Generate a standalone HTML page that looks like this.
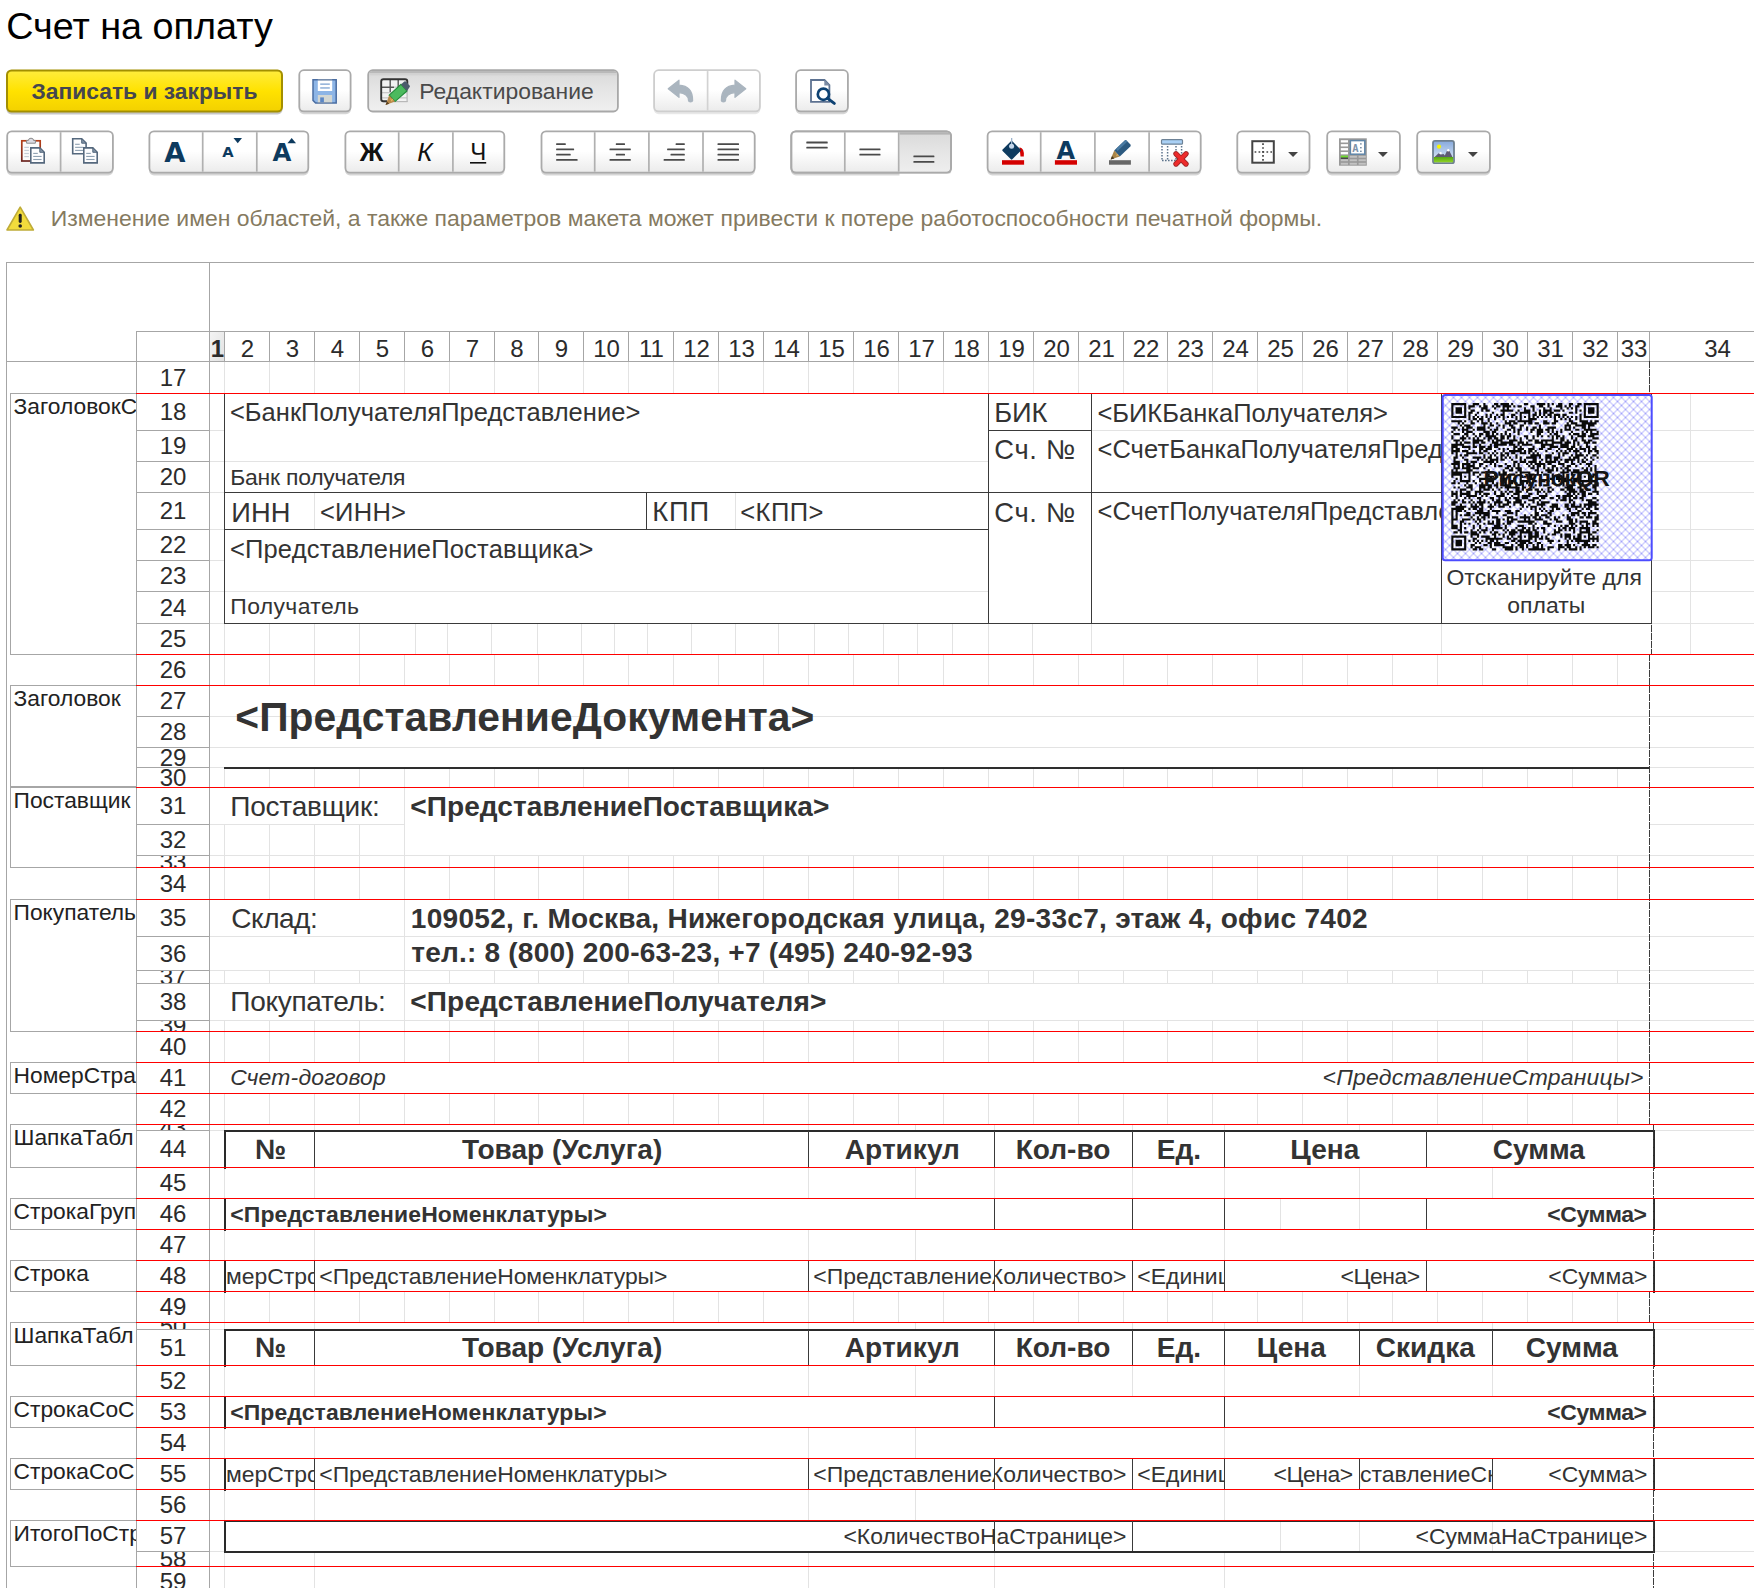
<!DOCTYPE html>
<html lang="ru"><head><meta charset="utf-8"><title>Счет на оплату</title>
<style>
html,body{margin:0;padding:0;background:#fff}
body{width:1754px;height:1588px;position:relative;overflow:hidden;font-family:"Liberation Sans",sans-serif;color:#333}
.abs{position:absolute}
#title{position:absolute;left:6.2px;top:4px;font-size:37.75px;line-height:44px;color:#000;white-space:nowrap}
.lbl{position:absolute;white-space:nowrap}
#warn{position:absolute;left:50.7px;top:204px;font-size:22.96px;line-height:28px;color:#857a5f;white-space:nowrap}
.t{position:absolute;white-space:nowrap;overflow:hidden;color:#333;box-sizing:border-box}
.t span{position:absolute;white-space:nowrap}
.b{font-weight:700}
.i{font-style:italic}
.rn{position:absolute;left:137px;width:72px;text-align:center;font-size:24px;color:#2b2b2b;overflow:hidden;white-space:nowrap}
.cn{position:absolute;top:332px;height:29px;line-height:34px;text-align:center;font-size:24px;color:#2b2b2b;overflow:hidden;white-space:nowrap}
.an{position:absolute;left:11px;width:125px;font-size:22.8px;color:#222;overflow:hidden;white-space:nowrap;height:28px;line-height:25px}
</style></head>
<body>
<div id="title">Счет на оплату</div>
<svg class="abs" style="left:0;top:0" width="1754" height="1588" viewBox="0 0 1754 1588">
<defs><linearGradient id="gSel" x1="0" y1="0" x2="1" y2="1"><stop offset="0" stop-color="#f4f4f4"/><stop offset="1" stop-color="#e2e2e2"/></linearGradient></defs>
<defs>
<linearGradient id="gBtn" x1="0" y1="0" x2="0" y2="1"><stop offset="0" stop-color="#fff"/><stop offset="0.48" stop-color="#fff"/><stop offset="1" stop-color="#ebebeb"/></linearGradient>
<linearGradient id="gYel" x1="0" y1="0" x2="0" y2="1"><stop offset="0" stop-color="#ffec3d"/><stop offset="0.5" stop-color="#ffe200"/><stop offset="1" stop-color="#f3d100"/></linearGradient>
<linearGradient id="gPr" x1="0" y1="0" x2="0" y2="1"><stop offset="0" stop-color="#d9d9d9"/><stop offset="0.5" stop-color="#e6e6e6"/><stop offset="1" stop-color="#f0f0f0"/></linearGradient>
<linearGradient id="gSky" x1="0" y1="0" x2="0" y2="1"><stop offset="0" stop-color="#86a9dc"/><stop offset="1" stop-color="#e9f2fc"/></linearGradient>
<linearGradient id="gGrass" x1="0" y1="0" x2="0" y2="1"><stop offset="0" stop-color="#55a515"/><stop offset="1" stop-color="#90d424"/></linearGradient>
<linearGradient id="gClip" x1="0" y1="0" x2="0" y2="1"><stop offset="0" stop-color="#b5401a"/><stop offset="1" stop-color="#6b2520"/></linearGradient>
<pattern id="hatch" width="8" height="8" x="1605.5" y="501.5" patternUnits="userSpaceOnUse"><path d="M-1 -1L9 9M9 -1L-1 9" stroke="#a4a4fb" stroke-width="1" fill="none"/></pattern>
</defs>
<rect x="6.5" y="72.1" width="276" height="42.4" rx="5.0" fill="#000" opacity="0.22"/>
<rect x="7.0" y="70.5" width="275.0" height="41.0" rx="4.5" fill="url(#gYel)" stroke="#a38f00" stroke-width="2.0"/>
<rect x="298.9" y="71.89999999999999" width="52.10000000000002" height="42.4" rx="5.0" fill="#000" opacity="0.16"/>
<rect x="299.29999999999995" y="70.2" width="51.300000000000026" height="41.2" rx="4.5" fill="url(#gBtn)" stroke="#aaaaaa" stroke-width="1.8"/>
<rect x="368.2" y="70.2" width="249.69999999999993" height="41.30000000000001" rx="4.5" fill="url(#gPr)" stroke="#a8a8a8" stroke-width="1.8"/>
<clipPath id="c367_69"><rect x="369.1" y="71.1" width="247.89999999999995" height="39.50000000000001" rx="3.5"/></clipPath>
<g clip-path="url(#c367_69)"><rect x="367.3" y="69.3" width="251.49999999999994" height="4" fill="#b9b9b9"/><rect x="367.3" y="73.3" width="251.49999999999994" height="2" fill="#d2d2d2"/></g>
<rect x="653.7" y="71.89999999999999" width="106.59999999999991" height="42.4" rx="5.0" fill="#000" opacity="0.09"/>
<rect x="654.1" y="70.2" width="105.79999999999991" height="41.2" rx="4.5" fill="url(#gBtn)" stroke="#cecece" stroke-width="1.8"/>
<rect x="706.75" y="71.1" width="1.7" height="39.4" fill="#d2d2d2"/>
<rect x="795.7" y="71.89999999999999" width="52.59999999999991" height="42.4" rx="5.0" fill="#000" opacity="0.16"/>
<rect x="796.1" y="70.2" width="51.79999999999991" height="41.2" rx="4.5" fill="url(#gBtn)" stroke="#aaaaaa" stroke-width="1.8"/>
<path d="M313 79.8H336.2V103H315.6L313 100.4Z" fill="#8db5e6" stroke="#4a6da2" stroke-width="1.5" stroke-linejoin="miter"/>
<rect x="317.8" y="80.4" width="14.4" height="10.6" fill="#fff"/><rect x="317.8" y="79.3" width="14.4" height="1.2" fill="#8a9bb0"/>
<rect x="320.2" y="83.4" width="9.6" height="1.5" fill="#8fb0d8"/><rect x="320.2" y="87.2" width="9.6" height="1.5" fill="#8fb0d8"/>
<rect x="317.8" y="95" width="14.3" height="7.6" fill="#d3d7d3"/><rect x="317.8" y="102" width="14.3" height="1.2" fill="#8a9bb0"/><rect x="320.2" y="97.4" width="3.7" height="5" fill="#5b87c5"/>
<rect x="381.5" y="80" width="25.5" height="21" fill="#f2f2f2"/>
<rect x="382" y="86.5" width="25" height="1.3" fill="#c8c8c8"/>
<rect x="382" y="92" width="25" height="1.3" fill="#c8c8c8"/>
<rect x="382" y="97.2" width="25" height="1.3" fill="#c8c8c8"/>
<rect x="382" y="101" width="25.5" height="1.2" fill="#b8b8b8"/><rect x="406.5" y="82" width="1.2" height="20" fill="#b8b8b8"/>
<rect x="389.5" y="80" width="1.4" height="12" fill="#555"/>
<rect x="397.5" y="80" width="1.4" height="12" fill="#555"/>
<rect x="382" y="86.6" width="12" height="1.4" fill="#555"/>
<path d="M387 101.2H383.5Q381.2 101.2 381.2 98.9V81.5Q381.2 79.2 383.5 79.2H405Q407.3 79.2 407.3 81.5V84" fill="none" stroke="#333" stroke-width="1.9"/>
<path d="M389.2 95.2L401 84.4L407 91L395 101.6Z" fill="#4cba5e" stroke="#1f8a36" stroke-width="1.1"/>
<path d="M401 84.4L404.3 81.5Q405.3 80.8 406.2 81.7L409.6 85.4Q410.4 86.4 409.5 87.3L407 91Z" fill="#4b5b6b"/>
<path d="M389.2 95.2L385.6 105L395 101.6Z" fill="#b8894a"/><path d="M385.6 105L386.9 101.4L389.2 103.7Z" fill="#5a4020"/><path d="M389.6 97.5L391.5 99.8L393.2 98.6L391.9 101.8Z" fill="#f0c060"/>
<path d="M668.2 88.8L679 80.2V85.2Q692.8 86 692.6 100.6Q692.4 101.9 690.6 101.9Q688.6 101.9 688.5 100.4Q688.2 93.4 679 92.6V97.4Z" fill="#aab5bf" stroke="#aab5bf" stroke-width="1.2" stroke-linejoin="round"/>
<path d="M745.8 88.8L735 80.2V85.2Q721.2 86 721.4 100.6Q721.6 101.9 723.4 101.9Q725.4 101.9 725.5 100.4Q725.8 93.4 735 92.6V97.4Z" fill="#aab5bf" stroke="#aab5bf" stroke-width="1.2" stroke-linejoin="round"/>
<path d="M811 80H824.5L829.4 85V101.9H811Z" fill="#fff" stroke="#5d7291" stroke-width="1.8" stroke-linejoin="miter"/><path d="M824.3 79.6V85.4H830Z" fill="#7b8ba3"/>
<circle cx="823.4" cy="94.2" r="5.6" fill="#fff" stroke="#0e4273" stroke-width="2.7"/><path d="M827.6 98.4L834.3 103.4" stroke="#0e4273" stroke-width="3" stroke-linecap="round"/>
<rect x="6.8" y="133.0" width="106.5" height="42.49999999999999" rx="5.0" fill="#000" opacity="0.16"/>
<rect x="7.2" y="131.3" width="105.7" height="41.3" rx="4.5" fill="url(#gBtn)" stroke="#aaaaaa" stroke-width="1.8"/>
<rect x="59.75" y="132.20000000000002" width="1.7" height="39.49999999999999" fill="#b0b0b0"/>
<rect x="149.0" y="133.0" width="159.7" height="42.49999999999999" rx="5.0" fill="#000" opacity="0.16"/>
<rect x="149.4" y="131.3" width="158.89999999999998" height="41.3" rx="4.5" fill="url(#gBtn)" stroke="#aaaaaa" stroke-width="1.8"/>
<rect x="201.85" y="132.20000000000002" width="1.7" height="39.49999999999999" fill="#b0b0b0"/>
<rect x="255.95000000000002" y="132.20000000000002" width="1.7" height="39.49999999999999" fill="#b0b0b0"/>
<rect x="345.0" y="133.0" width="159.7" height="42.49999999999999" rx="5.0" fill="#000" opacity="0.16"/>
<rect x="345.4" y="131.3" width="158.89999999999998" height="41.3" rx="4.5" fill="url(#gBtn)" stroke="#aaaaaa" stroke-width="1.8"/>
<rect x="397.84999999999997" y="132.20000000000002" width="1.7" height="39.49999999999999" fill="#b0b0b0"/>
<rect x="452.04999999999995" y="132.20000000000002" width="1.7" height="39.49999999999999" fill="#b0b0b0"/>
<rect x="541.1" y="133.0" width="214.0" height="42.49999999999999" rx="5.0" fill="#000" opacity="0.16"/>
<rect x="541.5" y="131.3" width="213.2" height="41.3" rx="4.5" fill="url(#gBtn)" stroke="#aaaaaa" stroke-width="1.8"/>
<rect x="593.85" y="132.20000000000002" width="1.7" height="39.49999999999999" fill="#b0b0b0"/>
<rect x="648.05" y="132.20000000000002" width="1.7" height="39.49999999999999" fill="#b0b0b0"/>
<rect x="702.15" y="132.20000000000002" width="1.7" height="39.49999999999999" fill="#b0b0b0"/>
<rect x="790.9" y="133.0" width="160.5" height="42.49999999999999" rx="5.0" fill="#000" opacity="0.16"/>
<rect x="791.3" y="131.3" width="159.7" height="41.3" rx="4.5" fill="url(#gBtn)" stroke="#aaaaaa" stroke-width="1.8"/>
<clipPath id="c790_130"><rect x="792.1999999999999" y="132.20000000000002" width="157.9" height="39.49999999999999" rx="3.5"/></clipPath>
<g clip-path="url(#c790_130)"><rect x="899.5" y="130.4" width="51.5" height="46.099999999999994" fill="url(#gPr)"/><rect x="899.5" y="130.4" width="51.5" height="4.2" fill="#b4b4b4"/></g>
<rect x="899.5" y="173.5" width="53.5" height="3" fill="#fff"/>
<rect x="791.3" y="131.3" width="159.7" height="41.3" rx="4.5" fill="none" stroke="#aaaaaa" stroke-width="1.8"/>
<rect x="843.9499999999999" y="132.20000000000002" width="1.7" height="39.49999999999999" fill="#b0b0b0"/>
<rect x="897.85" y="132.20000000000002" width="1.7" height="39.49999999999999" fill="#b0b0b0"/>
<rect x="987.2" y="133.0" width="213.89999999999986" height="42.49999999999999" rx="5.0" fill="#000" opacity="0.16"/>
<rect x="987.6" y="131.3" width="213.09999999999985" height="41.3" rx="4.5" fill="url(#gBtn)" stroke="#aaaaaa" stroke-width="1.8"/>
<rect x="1039.8500000000001" y="132.20000000000002" width="1.7" height="39.49999999999999" fill="#b0b0b0"/>
<rect x="1094.0500000000002" y="132.20000000000002" width="1.7" height="39.49999999999999" fill="#b0b0b0"/>
<rect x="1148.25" y="132.20000000000002" width="1.7" height="39.49999999999999" fill="#b0b0b0"/>
<rect x="1236.9" y="133.0" width="73.0" height="42.49999999999999" rx="5.0" fill="#000" opacity="0.16"/>
<rect x="1237.3000000000002" y="131.3" width="72.2" height="41.3" rx="4.5" fill="url(#gBtn)" stroke="#aaaaaa" stroke-width="1.8"/>
<rect x="1326.8" y="133.0" width="73.5" height="42.49999999999999" rx="5.0" fill="#000" opacity="0.16"/>
<rect x="1327.2" y="131.3" width="72.7" height="41.3" rx="4.5" fill="url(#gBtn)" stroke="#aaaaaa" stroke-width="1.8"/>
<rect x="1416.8" y="133.0" width="73.5" height="42.49999999999999" rx="5.0" fill="#000" opacity="0.16"/>
<rect x="1417.2" y="131.3" width="72.7" height="41.3" rx="4.5" fill="url(#gBtn)" stroke="#aaaaaa" stroke-width="1.8"/>
<rect x="21.8" y="140.8" width="18.4" height="20.2" fill="#fbfbfb" stroke="url(#gClip)" stroke-width="1.7"/>
<path d="M26.6 143.2V140.4H28.3Q28.6 138.2 31 138.2Q33.4 138.2 33.7 140.4H35.4V143.2Z" fill="#dcdce4" stroke="#8a8a8a" stroke-width="1"/>
<rect x="24.3" y="146.8" width="4.6" height="1.2" fill="#c5cdd6"/>
<rect x="24.3" y="149.85000000000002" width="4.6" height="1.2" fill="#c5cdd6"/>
<rect x="24.3" y="152.9" width="4.6" height="1.2" fill="#c5cdd6"/>
<rect x="24.3" y="155.95000000000002" width="4.6" height="1.2" fill="#c5cdd6"/>
<path d="M30.8 147.9H39.8L44.2 152.29999999999998V162.89999999999998H30.8Z" fill="#fdfdfe" stroke="#55687d" stroke-width="1.6" stroke-linejoin="miter"/><path d="M39.8 147.9V152.29999999999998H44.2Z" fill="#8495a8" stroke="#55687d" stroke-width="1"/><rect x="33.2" y="152.85" width="4.6" height="1.1" fill="#8ea0b1"/><rect x="33.2" y="155.9" width="8.399999999999999" height="1.1" fill="#8ea0b1"/><rect x="33.2" y="158.95" width="8.399999999999999" height="1.1" fill="#8ea0b1"/>
<path d="M72.7 138.8H81.7L86.10000000000001 143.2V153.79999999999998H72.7Z" fill="#fdfdfe" stroke="#55687d" stroke-width="1.6" stroke-linejoin="miter"/><path d="M81.7 138.8V143.2H86.10000000000001Z" fill="#8495a8" stroke="#55687d" stroke-width="1"/><rect x="75.10000000000001" y="143.75" width="4.6" height="1.1" fill="#8ea0b1"/><rect x="75.10000000000001" y="146.8" width="8.399999999999999" height="1.1" fill="#8ea0b1"/><rect x="75.10000000000001" y="149.85" width="8.399999999999999" height="1.1" fill="#8ea0b1"/>
<path d="M83.8 147.9H92.8L97.2 152.29999999999998V162.89999999999998H83.8Z" fill="#fdfdfe" stroke="#55687d" stroke-width="1.6" stroke-linejoin="miter"/><path d="M92.8 147.9V152.29999999999998H97.2Z" fill="#8495a8" stroke="#55687d" stroke-width="1"/><rect x="86.2" y="152.85" width="4.6" height="1.1" fill="#8ea0b1"/><rect x="86.2" y="155.9" width="8.399999999999999" height="1.1" fill="#8ea0b1"/><rect x="86.2" y="158.95" width="8.399999999999999" height="1.1" fill="#8ea0b1"/>
<text x="174.9" y="162" font-size="27.4" font-family="DejaVu Sans, Liberation Sans, sans-serif" font-weight="700" fill="#0d3a5e" text-anchor="middle">A</text>
<text x="227.9" y="156.7" font-size="14.7" font-family="DejaVu Sans, Liberation Sans, sans-serif" font-weight="700" fill="#0d3a5e" text-anchor="middle">A</text>
<path d="M233.5 138H242L237.75 143.2Z" fill="#0d3a5e"/>
<text x="282" y="160.8" font-size="24.4" font-family="DejaVu Sans, Liberation Sans, sans-serif" font-weight="700" fill="#0d3a5e" text-anchor="middle">A</text>
<path d="M287.4 143.2H296L291.7 138Z" fill="#0d3a5e"/>
<text x="371.5" y="161" font-size="26" font-family="Liberation Sans, sans-serif" font-weight="700" fill="#111" text-anchor="middle">Ж</text>
<text x="425" y="161" font-size="26" font-family="Liberation Sans, sans-serif" font-style="italic" fill="#111" text-anchor="middle">К</text>
<text x="478.2" y="159.5" font-size="24" font-family="Liberation Sans, sans-serif" fill="#111" text-anchor="middle">Ч</text><rect x="470" y="162" width="16.2" height="1.6" fill="#111"/>
<rect x="556.1" y="143.2" width="9.699999999999932" height="1.8" rx="0.5" fill="#4a4a4a"/><rect x="556.1" y="148.5" width="18.0" height="1.8" rx="0.5" fill="#4a4a4a"/><rect x="556.1" y="153.79999999999998" width="14.600000000000023" height="1.8" rx="0.5" fill="#4a4a4a"/><rect x="556.1" y="159.0" width="21.5" height="1.8" rx="0.5" fill="#4a4a4a"/>
<rect x="615.8" y="143.2" width="9.200000000000045" height="1.8" rx="0.5" fill="#4a4a4a"/><rect x="609.5" y="148.5" width="21.299999999999955" height="1.8" rx="0.5" fill="#4a4a4a"/><rect x="615.8" y="153.79999999999998" width="9.200000000000045" height="1.8" rx="0.5" fill="#4a4a4a"/><rect x="609.5" y="159.0" width="21.299999999999955" height="1.8" rx="0.5" fill="#4a4a4a"/>
<rect x="675.6" y="143.2" width="9.199999999999932" height="1.8" rx="0.5" fill="#4a4a4a"/><rect x="667.1" y="148.5" width="17.699999999999932" height="1.8" rx="0.5" fill="#4a4a4a"/><rect x="670.5" y="153.79999999999998" width="14.299999999999955" height="1.8" rx="0.5" fill="#4a4a4a"/><rect x="663.6" y="159.0" width="21.199999999999932" height="1.8" rx="0.5" fill="#4a4a4a"/>
<rect x="717.5" y="143.2" width="21.5" height="1.8" rx="0.5" fill="#4a4a4a"/><rect x="717.5" y="148.5" width="21.5" height="1.8" rx="0.5" fill="#4a4a4a"/><rect x="717.5" y="153.79999999999998" width="21.5" height="1.8" rx="0.5" fill="#4a4a4a"/><rect x="717.5" y="159.0" width="21.5" height="1.8" rx="0.5" fill="#4a4a4a"/>
<rect x="806.3" y="141.6" width="21.40000000000009" height="1.8" rx="0.5" fill="#4a4a4a"/>
<rect x="806.3" y="146.79999999999998" width="21.40000000000009" height="1.8" rx="0.5" fill="#4a4a4a"/>
<rect x="859.4" y="148.5" width="21.100000000000023" height="1.8" rx="0.5" fill="#4a4a4a"/>
<rect x="859.4" y="153.79999999999998" width="21.100000000000023" height="1.8" rx="0.5" fill="#4a4a4a"/>
<rect x="913.4" y="155.5" width="21.0" height="1.8" rx="0.5" fill="#4a4a4a"/>
<rect x="913.4" y="160.9" width="21.0" height="1.8" rx="0.5" fill="#4a4a4a"/>
<rect x="1002" y="160.2" width="22.1" height="4.5" fill="#d40000"/>
<path d="M1019.5 147.2Q1024.6 148 1023.8 156.6L1020.5 156.6Z" fill="#d40000"/>
<path d="M1011.6 140.6L1020.6 149.6Q1021.3 150.3 1020.6 151L1012.3 159.3Q1011.6 160 1010.9 159.3L1002.6 151Q1001.9 150.3 1002.6 149.6Z" fill="#0d3a5e"/>
<rect x="1011" y="138" width="1.3" height="8" fill="#9db4cc"/><circle cx="1011.6" cy="146.3" r="2.5" fill="#c4d6ea"/>
<rect x="1054.9" y="160.2" width="22.1" height="4.5" fill="#d40000"/>
<text x="1065.9" y="158.7" font-size="24" font-family="DejaVu Sans, Liberation Sans, sans-serif" font-weight="700" fill="#0d3a5e" text-anchor="middle">A</text>
<rect x="1109" y="160.2" width="21.9" height="4.5" fill="#666"/>
<path d="M1114.2 150.4L1124.6 140.4Q1125.6 139.6 1126.6 140.5L1130.4 144.6Q1131.2 145.6 1130.3 146.5L1119.8 156.6Z" fill="#2c5a80"/><path d="M1116 149L1125.6 139.9L1127.4 141.6L1117.6 151Z" fill="#4a7ba3"/>
<path d="M1114.2 150.4L1110.6 159.6L1119.8 156.6Z" fill="#a88448"/><path d="M1110.6 159.6L1112 156L1114.4 158.4Z" fill="#4a3a20"/><path d="M1115 152.5L1116.6 155L1118.2 154L1117 156.4Z" fill="#e8c070"/>
<rect x="1161.5" y="139.6" width="21" height="4.6" rx="1" fill="#a9d0f5" stroke="#6d8296" stroke-width="1.2"/>
<path d="M1162 146V161" stroke="#5d748c" stroke-width="1.5" stroke-dasharray="1.6 1.4"/>
<path d="M1167.6 146V161" stroke="#5d748c" stroke-width="1.5" stroke-dasharray="1.6 1.4"/>
<path d="M1176 146V161" stroke="#5d748c" stroke-width="1.5" stroke-dasharray="1.6 1.4"/>
<path d="M1181.6 146V161" stroke="#5d748c" stroke-width="1.5" stroke-dasharray="1.6 1.4"/>
<path d="M1162 160.4H1183" stroke="#5d748c" stroke-width="1.5" stroke-dasharray="1.6 1.4"/>
<path d="M1176 153.8L1186 164M1186 153.8L1176 164" stroke="#a02828" stroke-width="5.4" stroke-linecap="round"/><path d="M1176 153.8L1186 164M1186 153.8L1176 164" stroke="#ee2b2b" stroke-width="3.6" stroke-linecap="round"/>
<rect x="1252.3" y="141.2" width="21.5" height="21.5" fill="#fff" stroke="#444" stroke-width="2"/>
<path d="M1254.6 152H1272" stroke="#444" stroke-width="1.7" stroke-dasharray="1.7 2.25"/><path d="M1263 143.2V161.4" stroke="#444" stroke-width="1.7" stroke-dasharray="1.7 2.25"/>
<path d="M1288.1 152H1298.0L1293.05 157Z" fill="#444"/>
<path d="M1378 152H1387.9L1382.95 157Z" fill="#444"/>
<path d="M1468 152H1477.9L1472.95 157Z" fill="#444"/>
<rect x="1339" y="138.3" width="27.8" height="27.4" fill="#999"/>
<rect x="1340.8" y="140.2" width="7.2" height="2.3" fill="#fff"/>
<rect x="1340.8" y="144.14999999999998" width="7.2" height="2.3" fill="#fff"/>
<rect x="1340.8" y="148.1" width="7.2" height="2.3" fill="#fff"/>
<rect x="1340.8" y="152.04999999999998" width="7.2" height="2.3" fill="#fff"/>
<rect x="1340.8" y="155.6" width="7.2" height="2" fill="#6edb2e"/><rect x="1340.8" y="157.6" width="7.2" height="1.2" fill="#333"/>
<rect x="1349.7" y="155.8" width="7.2" height="1.9" fill="#c2c2c2"/>
<rect x="1358.6" y="155.8" width="7.2" height="1.9" fill="#c2c2c2"/>
<rect x="1340.8" y="159.3" width="7.2" height="1.9" fill="#c2c2c2"/>
<rect x="1349.7" y="159.3" width="7.2" height="1.9" fill="#c2c2c2"/>
<rect x="1358.6" y="159.3" width="7.2" height="1.9" fill="#c2c2c2"/>
<rect x="1340.8" y="162.8" width="7.2" height="1.9" fill="#c2c2c2"/>
<rect x="1349.7" y="162.8" width="7.2" height="1.9" fill="#c2c2c2"/>
<rect x="1358.6" y="162.8" width="7.2" height="1.9" fill="#c2c2c2"/>
<rect x="1350.4" y="140.6" width="14.4" height="13.6" fill="#fff" stroke="#5f86a8" stroke-width="1.5"/>
<text x="1355.5" y="151.6" font-size="10.5" font-family="DejaVu Sans Mono, Liberation Mono, monospace" font-weight="700" fill="#7d93aa" text-anchor="middle">A</text>
<rect x="1360" y="143.2" width="1.7" height="1.4" fill="#7d93aa"/>
<rect x="1360" y="147" width="1.7" height="1.4" fill="#7d93aa"/>
<rect x="1360" y="150.6" width="1.7" height="1.4" fill="#7d93aa"/>
<rect x="1433" y="140.9" width="21" height="22.3" rx="2" fill="url(#gSky)" stroke="#6e8090" stroke-width="1.8"/>
<rect x="1433.9" y="157" width="19.2" height="5.3" fill="url(#gGrass)"/>
<path d="M1434.6 157L1438.6 153.2L1441 154.6L1443.6 154L1444.8 155.4L1447.6 149.6L1449.4 151L1452.2 156.4V157Z" fill="#5f5b72"/>
<circle cx="1439" cy="146.7" r="2.1" fill="#f8f400"/><circle cx="1448.2" cy="150.2" r="1.2" fill="#fff"/><circle cx="1440.6" cy="153.2" r="1.1" fill="#fff"/>
<path d="M20.2 207.2L33.4 230H7Z" fill="#f2dc3c" stroke="#bfac38" stroke-width="1.6" stroke-linejoin="round"/><rect x="18.7" y="213.8" width="3" height="9.2" rx="1.4" fill="#222"/><circle cx="20.2" cy="226" r="1.8" fill="#222"/>
<g shape-rendering="crispEdges"><rect x="210" y="393" width="14" height="1" fill="#e3e3e3"/><rect x="210" y="430" width="14" height="1" fill="#e3e3e3"/><rect x="210" y="461" width="14" height="1" fill="#e3e3e3"/><rect x="210" y="492" width="14" height="1" fill="#e3e3e3"/><rect x="210" y="529" width="14" height="1" fill="#e3e3e3"/><rect x="210" y="560" width="14" height="1" fill="#e3e3e3"/><rect x="210" y="591" width="14" height="1" fill="#e3e3e3"/><rect x="210" y="623" width="14" height="1" fill="#e3e3e3"/><rect x="210" y="654" width="14" height="1" fill="#e3e3e3"/><rect x="210" y="685" width="14" height="1" fill="#e3e3e3"/><rect x="210" y="716" width="14" height="1" fill="#e3e3e3"/><rect x="210" y="747" width="14" height="1" fill="#e3e3e3"/><rect x="210" y="767" width="14" height="1" fill="#e3e3e3"/><rect x="210" y="787" width="14" height="1" fill="#e3e3e3"/><rect x="210" y="824" width="14" height="1" fill="#e3e3e3"/><rect x="210" y="855" width="14" height="1" fill="#e3e3e3"/><rect x="210" y="867" width="14" height="1" fill="#e3e3e3"/><rect x="210" y="899" width="14" height="1" fill="#e3e3e3"/><rect x="210" y="936" width="14" height="1" fill="#e3e3e3"/><rect x="210" y="970" width="14" height="1" fill="#e3e3e3"/><rect x="210" y="983" width="14" height="1" fill="#e3e3e3"/><rect x="210" y="1020" width="14" height="1" fill="#e3e3e3"/><rect x="210" y="1031" width="14" height="1" fill="#e3e3e3"/><rect x="210" y="1062" width="14" height="1" fill="#e3e3e3"/><rect x="210" y="1093" width="14" height="1" fill="#e3e3e3"/><rect x="210" y="1124" width="14" height="1" fill="#e3e3e3"/><rect x="210" y="1130" width="14" height="1" fill="#e3e3e3"/><rect x="210" y="1167" width="14" height="1" fill="#e3e3e3"/><rect x="210" y="1198" width="14" height="1" fill="#e3e3e3"/><rect x="210" y="1229" width="14" height="1" fill="#e3e3e3"/><rect x="210" y="1260" width="14" height="1" fill="#e3e3e3"/><rect x="210" y="1291" width="14" height="1" fill="#e3e3e3"/><rect x="210" y="1322" width="14" height="1" fill="#e3e3e3"/><rect x="210" y="1329" width="14" height="1" fill="#e3e3e3"/><rect x="210" y="1365" width="14" height="1" fill="#e3e3e3"/><rect x="210" y="1396" width="14" height="1" fill="#e3e3e3"/><rect x="210" y="1427" width="14" height="1" fill="#e3e3e3"/><rect x="210" y="1458" width="14" height="1" fill="#e3e3e3"/><rect x="210" y="1489" width="14" height="1" fill="#e3e3e3"/><rect x="210" y="1520" width="14" height="1" fill="#e3e3e3"/><rect x="210" y="1551" width="14" height="1" fill="#e3e3e3"/><rect x="210" y="1566" width="14" height="1" fill="#e3e3e3"/><rect x="224" y="361" width="1" height="32" fill="#e3e3e3"/><rect x="269" y="361" width="1" height="32" fill="#e3e3e3"/><rect x="314" y="361" width="1" height="32" fill="#e3e3e3"/><rect x="359" y="361" width="1" height="32" fill="#e3e3e3"/><rect x="404" y="361" width="1" height="32" fill="#e3e3e3"/><rect x="449" y="361" width="1" height="32" fill="#e3e3e3"/><rect x="494" y="361" width="1" height="32" fill="#e3e3e3"/><rect x="538" y="361" width="1" height="32" fill="#e3e3e3"/><rect x="583" y="361" width="1" height="32" fill="#e3e3e3"/><rect x="628" y="361" width="1" height="32" fill="#e3e3e3"/><rect x="673" y="361" width="1" height="32" fill="#e3e3e3"/><rect x="718" y="361" width="1" height="32" fill="#e3e3e3"/><rect x="763" y="361" width="1" height="32" fill="#e3e3e3"/><rect x="808" y="361" width="1" height="32" fill="#e3e3e3"/><rect x="853" y="361" width="1" height="32" fill="#e3e3e3"/><rect x="898" y="361" width="1" height="32" fill="#e3e3e3"/><rect x="943" y="361" width="1" height="32" fill="#e3e3e3"/><rect x="988" y="361" width="1" height="32" fill="#e3e3e3"/><rect x="1033" y="361" width="1" height="32" fill="#e3e3e3"/><rect x="1078" y="361" width="1" height="32" fill="#e3e3e3"/><rect x="1123" y="361" width="1" height="32" fill="#e3e3e3"/><rect x="1167" y="361" width="1" height="32" fill="#e3e3e3"/><rect x="1212" y="361" width="1" height="32" fill="#e3e3e3"/><rect x="1257" y="361" width="1" height="32" fill="#e3e3e3"/><rect x="1302" y="361" width="1" height="32" fill="#e3e3e3"/><rect x="1347" y="361" width="1" height="32" fill="#e3e3e3"/><rect x="1392" y="361" width="1" height="32" fill="#e3e3e3"/><rect x="1437" y="361" width="1" height="32" fill="#e3e3e3"/><rect x="1482" y="361" width="1" height="32" fill="#e3e3e3"/><rect x="1527" y="361" width="1" height="32" fill="#e3e3e3"/><rect x="1572" y="361" width="1" height="32" fill="#e3e3e3"/><rect x="1617" y="361" width="1" height="32" fill="#e3e3e3"/><rect x="1649" y="361" width="1" height="32" fill="#e3e3e3"/><rect x="224" y="654" width="1" height="31" fill="#e3e3e3"/><rect x="269" y="654" width="1" height="31" fill="#e3e3e3"/><rect x="314" y="654" width="1" height="31" fill="#e3e3e3"/><rect x="359" y="654" width="1" height="31" fill="#e3e3e3"/><rect x="404" y="654" width="1" height="31" fill="#e3e3e3"/><rect x="449" y="654" width="1" height="31" fill="#e3e3e3"/><rect x="494" y="654" width="1" height="31" fill="#e3e3e3"/><rect x="538" y="654" width="1" height="31" fill="#e3e3e3"/><rect x="583" y="654" width="1" height="31" fill="#e3e3e3"/><rect x="628" y="654" width="1" height="31" fill="#e3e3e3"/><rect x="673" y="654" width="1" height="31" fill="#e3e3e3"/><rect x="718" y="654" width="1" height="31" fill="#e3e3e3"/><rect x="763" y="654" width="1" height="31" fill="#e3e3e3"/><rect x="808" y="654" width="1" height="31" fill="#e3e3e3"/><rect x="853" y="654" width="1" height="31" fill="#e3e3e3"/><rect x="898" y="654" width="1" height="31" fill="#e3e3e3"/><rect x="943" y="654" width="1" height="31" fill="#e3e3e3"/><rect x="988" y="654" width="1" height="31" fill="#e3e3e3"/><rect x="1033" y="654" width="1" height="31" fill="#e3e3e3"/><rect x="1078" y="654" width="1" height="31" fill="#e3e3e3"/><rect x="1123" y="654" width="1" height="31" fill="#e3e3e3"/><rect x="1167" y="654" width="1" height="31" fill="#e3e3e3"/><rect x="1212" y="654" width="1" height="31" fill="#e3e3e3"/><rect x="1257" y="654" width="1" height="31" fill="#e3e3e3"/><rect x="1302" y="654" width="1" height="31" fill="#e3e3e3"/><rect x="1347" y="654" width="1" height="31" fill="#e3e3e3"/><rect x="1392" y="654" width="1" height="31" fill="#e3e3e3"/><rect x="1437" y="654" width="1" height="31" fill="#e3e3e3"/><rect x="1482" y="654" width="1" height="31" fill="#e3e3e3"/><rect x="1527" y="654" width="1" height="31" fill="#e3e3e3"/><rect x="1572" y="654" width="1" height="31" fill="#e3e3e3"/><rect x="1617" y="654" width="1" height="31" fill="#e3e3e3"/><rect x="1649" y="654" width="1" height="31" fill="#e3e3e3"/><rect x="224" y="767" width="1" height="20" fill="#e3e3e3"/><rect x="269" y="767" width="1" height="20" fill="#e3e3e3"/><rect x="314" y="767" width="1" height="20" fill="#e3e3e3"/><rect x="359" y="767" width="1" height="20" fill="#e3e3e3"/><rect x="404" y="767" width="1" height="20" fill="#e3e3e3"/><rect x="449" y="767" width="1" height="20" fill="#e3e3e3"/><rect x="494" y="767" width="1" height="20" fill="#e3e3e3"/><rect x="538" y="767" width="1" height="20" fill="#e3e3e3"/><rect x="583" y="767" width="1" height="20" fill="#e3e3e3"/><rect x="628" y="767" width="1" height="20" fill="#e3e3e3"/><rect x="673" y="767" width="1" height="20" fill="#e3e3e3"/><rect x="718" y="767" width="1" height="20" fill="#e3e3e3"/><rect x="763" y="767" width="1" height="20" fill="#e3e3e3"/><rect x="808" y="767" width="1" height="20" fill="#e3e3e3"/><rect x="853" y="767" width="1" height="20" fill="#e3e3e3"/><rect x="898" y="767" width="1" height="20" fill="#e3e3e3"/><rect x="943" y="767" width="1" height="20" fill="#e3e3e3"/><rect x="988" y="767" width="1" height="20" fill="#e3e3e3"/><rect x="1033" y="767" width="1" height="20" fill="#e3e3e3"/><rect x="1078" y="767" width="1" height="20" fill="#e3e3e3"/><rect x="1123" y="767" width="1" height="20" fill="#e3e3e3"/><rect x="1167" y="767" width="1" height="20" fill="#e3e3e3"/><rect x="1212" y="767" width="1" height="20" fill="#e3e3e3"/><rect x="1257" y="767" width="1" height="20" fill="#e3e3e3"/><rect x="1302" y="767" width="1" height="20" fill="#e3e3e3"/><rect x="1347" y="767" width="1" height="20" fill="#e3e3e3"/><rect x="1392" y="767" width="1" height="20" fill="#e3e3e3"/><rect x="1437" y="767" width="1" height="20" fill="#e3e3e3"/><rect x="1482" y="767" width="1" height="20" fill="#e3e3e3"/><rect x="1527" y="767" width="1" height="20" fill="#e3e3e3"/><rect x="1572" y="767" width="1" height="20" fill="#e3e3e3"/><rect x="1617" y="767" width="1" height="20" fill="#e3e3e3"/><rect x="1649" y="767" width="1" height="20" fill="#e3e3e3"/><rect x="224" y="867" width="1" height="32" fill="#e3e3e3"/><rect x="269" y="867" width="1" height="32" fill="#e3e3e3"/><rect x="314" y="867" width="1" height="32" fill="#e3e3e3"/><rect x="359" y="867" width="1" height="32" fill="#e3e3e3"/><rect x="404" y="867" width="1" height="32" fill="#e3e3e3"/><rect x="449" y="867" width="1" height="32" fill="#e3e3e3"/><rect x="494" y="867" width="1" height="32" fill="#e3e3e3"/><rect x="538" y="867" width="1" height="32" fill="#e3e3e3"/><rect x="583" y="867" width="1" height="32" fill="#e3e3e3"/><rect x="628" y="867" width="1" height="32" fill="#e3e3e3"/><rect x="673" y="867" width="1" height="32" fill="#e3e3e3"/><rect x="718" y="867" width="1" height="32" fill="#e3e3e3"/><rect x="763" y="867" width="1" height="32" fill="#e3e3e3"/><rect x="808" y="867" width="1" height="32" fill="#e3e3e3"/><rect x="853" y="867" width="1" height="32" fill="#e3e3e3"/><rect x="898" y="867" width="1" height="32" fill="#e3e3e3"/><rect x="943" y="867" width="1" height="32" fill="#e3e3e3"/><rect x="988" y="867" width="1" height="32" fill="#e3e3e3"/><rect x="1033" y="867" width="1" height="32" fill="#e3e3e3"/><rect x="1078" y="867" width="1" height="32" fill="#e3e3e3"/><rect x="1123" y="867" width="1" height="32" fill="#e3e3e3"/><rect x="1167" y="867" width="1" height="32" fill="#e3e3e3"/><rect x="1212" y="867" width="1" height="32" fill="#e3e3e3"/><rect x="1257" y="867" width="1" height="32" fill="#e3e3e3"/><rect x="1302" y="867" width="1" height="32" fill="#e3e3e3"/><rect x="1347" y="867" width="1" height="32" fill="#e3e3e3"/><rect x="1392" y="867" width="1" height="32" fill="#e3e3e3"/><rect x="1437" y="867" width="1" height="32" fill="#e3e3e3"/><rect x="1482" y="867" width="1" height="32" fill="#e3e3e3"/><rect x="1527" y="867" width="1" height="32" fill="#e3e3e3"/><rect x="1572" y="867" width="1" height="32" fill="#e3e3e3"/><rect x="1617" y="867" width="1" height="32" fill="#e3e3e3"/><rect x="1649" y="867" width="1" height="32" fill="#e3e3e3"/><rect x="224" y="970" width="1" height="13" fill="#e3e3e3"/><rect x="269" y="970" width="1" height="13" fill="#e3e3e3"/><rect x="314" y="970" width="1" height="13" fill="#e3e3e3"/><rect x="359" y="970" width="1" height="13" fill="#e3e3e3"/><rect x="404" y="970" width="1" height="13" fill="#e3e3e3"/><rect x="449" y="970" width="1" height="13" fill="#e3e3e3"/><rect x="494" y="970" width="1" height="13" fill="#e3e3e3"/><rect x="538" y="970" width="1" height="13" fill="#e3e3e3"/><rect x="583" y="970" width="1" height="13" fill="#e3e3e3"/><rect x="628" y="970" width="1" height="13" fill="#e3e3e3"/><rect x="673" y="970" width="1" height="13" fill="#e3e3e3"/><rect x="718" y="970" width="1" height="13" fill="#e3e3e3"/><rect x="763" y="970" width="1" height="13" fill="#e3e3e3"/><rect x="808" y="970" width="1" height="13" fill="#e3e3e3"/><rect x="853" y="970" width="1" height="13" fill="#e3e3e3"/><rect x="898" y="970" width="1" height="13" fill="#e3e3e3"/><rect x="943" y="970" width="1" height="13" fill="#e3e3e3"/><rect x="988" y="970" width="1" height="13" fill="#e3e3e3"/><rect x="1033" y="970" width="1" height="13" fill="#e3e3e3"/><rect x="1078" y="970" width="1" height="13" fill="#e3e3e3"/><rect x="1123" y="970" width="1" height="13" fill="#e3e3e3"/><rect x="1167" y="970" width="1" height="13" fill="#e3e3e3"/><rect x="1212" y="970" width="1" height="13" fill="#e3e3e3"/><rect x="1257" y="970" width="1" height="13" fill="#e3e3e3"/><rect x="1302" y="970" width="1" height="13" fill="#e3e3e3"/><rect x="1347" y="970" width="1" height="13" fill="#e3e3e3"/><rect x="1392" y="970" width="1" height="13" fill="#e3e3e3"/><rect x="1437" y="970" width="1" height="13" fill="#e3e3e3"/><rect x="1482" y="970" width="1" height="13" fill="#e3e3e3"/><rect x="1527" y="970" width="1" height="13" fill="#e3e3e3"/><rect x="1572" y="970" width="1" height="13" fill="#e3e3e3"/><rect x="1617" y="970" width="1" height="13" fill="#e3e3e3"/><rect x="1649" y="970" width="1" height="13" fill="#e3e3e3"/><rect x="224" y="1020" width="1" height="11" fill="#e3e3e3"/><rect x="269" y="1020" width="1" height="11" fill="#e3e3e3"/><rect x="314" y="1020" width="1" height="11" fill="#e3e3e3"/><rect x="359" y="1020" width="1" height="11" fill="#e3e3e3"/><rect x="404" y="1020" width="1" height="11" fill="#e3e3e3"/><rect x="449" y="1020" width="1" height="11" fill="#e3e3e3"/><rect x="494" y="1020" width="1" height="11" fill="#e3e3e3"/><rect x="538" y="1020" width="1" height="11" fill="#e3e3e3"/><rect x="583" y="1020" width="1" height="11" fill="#e3e3e3"/><rect x="628" y="1020" width="1" height="11" fill="#e3e3e3"/><rect x="673" y="1020" width="1" height="11" fill="#e3e3e3"/><rect x="718" y="1020" width="1" height="11" fill="#e3e3e3"/><rect x="763" y="1020" width="1" height="11" fill="#e3e3e3"/><rect x="808" y="1020" width="1" height="11" fill="#e3e3e3"/><rect x="853" y="1020" width="1" height="11" fill="#e3e3e3"/><rect x="898" y="1020" width="1" height="11" fill="#e3e3e3"/><rect x="943" y="1020" width="1" height="11" fill="#e3e3e3"/><rect x="988" y="1020" width="1" height="11" fill="#e3e3e3"/><rect x="1033" y="1020" width="1" height="11" fill="#e3e3e3"/><rect x="1078" y="1020" width="1" height="11" fill="#e3e3e3"/><rect x="1123" y="1020" width="1" height="11" fill="#e3e3e3"/><rect x="1167" y="1020" width="1" height="11" fill="#e3e3e3"/><rect x="1212" y="1020" width="1" height="11" fill="#e3e3e3"/><rect x="1257" y="1020" width="1" height="11" fill="#e3e3e3"/><rect x="1302" y="1020" width="1" height="11" fill="#e3e3e3"/><rect x="1347" y="1020" width="1" height="11" fill="#e3e3e3"/><rect x="1392" y="1020" width="1" height="11" fill="#e3e3e3"/><rect x="1437" y="1020" width="1" height="11" fill="#e3e3e3"/><rect x="1482" y="1020" width="1" height="11" fill="#e3e3e3"/><rect x="1527" y="1020" width="1" height="11" fill="#e3e3e3"/><rect x="1572" y="1020" width="1" height="11" fill="#e3e3e3"/><rect x="1617" y="1020" width="1" height="11" fill="#e3e3e3"/><rect x="1649" y="1020" width="1" height="11" fill="#e3e3e3"/><rect x="224" y="1031" width="1" height="31" fill="#e3e3e3"/><rect x="269" y="1031" width="1" height="31" fill="#e3e3e3"/><rect x="314" y="1031" width="1" height="31" fill="#e3e3e3"/><rect x="359" y="1031" width="1" height="31" fill="#e3e3e3"/><rect x="404" y="1031" width="1" height="31" fill="#e3e3e3"/><rect x="449" y="1031" width="1" height="31" fill="#e3e3e3"/><rect x="494" y="1031" width="1" height="31" fill="#e3e3e3"/><rect x="538" y="1031" width="1" height="31" fill="#e3e3e3"/><rect x="583" y="1031" width="1" height="31" fill="#e3e3e3"/><rect x="628" y="1031" width="1" height="31" fill="#e3e3e3"/><rect x="673" y="1031" width="1" height="31" fill="#e3e3e3"/><rect x="718" y="1031" width="1" height="31" fill="#e3e3e3"/><rect x="763" y="1031" width="1" height="31" fill="#e3e3e3"/><rect x="808" y="1031" width="1" height="31" fill="#e3e3e3"/><rect x="853" y="1031" width="1" height="31" fill="#e3e3e3"/><rect x="898" y="1031" width="1" height="31" fill="#e3e3e3"/><rect x="943" y="1031" width="1" height="31" fill="#e3e3e3"/><rect x="988" y="1031" width="1" height="31" fill="#e3e3e3"/><rect x="1033" y="1031" width="1" height="31" fill="#e3e3e3"/><rect x="1078" y="1031" width="1" height="31" fill="#e3e3e3"/><rect x="1123" y="1031" width="1" height="31" fill="#e3e3e3"/><rect x="1167" y="1031" width="1" height="31" fill="#e3e3e3"/><rect x="1212" y="1031" width="1" height="31" fill="#e3e3e3"/><rect x="1257" y="1031" width="1" height="31" fill="#e3e3e3"/><rect x="1302" y="1031" width="1" height="31" fill="#e3e3e3"/><rect x="1347" y="1031" width="1" height="31" fill="#e3e3e3"/><rect x="1392" y="1031" width="1" height="31" fill="#e3e3e3"/><rect x="1437" y="1031" width="1" height="31" fill="#e3e3e3"/><rect x="1482" y="1031" width="1" height="31" fill="#e3e3e3"/><rect x="1527" y="1031" width="1" height="31" fill="#e3e3e3"/><rect x="1572" y="1031" width="1" height="31" fill="#e3e3e3"/><rect x="1617" y="1031" width="1" height="31" fill="#e3e3e3"/><rect x="1649" y="1031" width="1" height="31" fill="#e3e3e3"/><rect x="224" y="1093" width="1" height="31" fill="#e3e3e3"/><rect x="269" y="1093" width="1" height="31" fill="#e3e3e3"/><rect x="314" y="1093" width="1" height="31" fill="#e3e3e3"/><rect x="359" y="1093" width="1" height="31" fill="#e3e3e3"/><rect x="404" y="1093" width="1" height="31" fill="#e3e3e3"/><rect x="449" y="1093" width="1" height="31" fill="#e3e3e3"/><rect x="494" y="1093" width="1" height="31" fill="#e3e3e3"/><rect x="538" y="1093" width="1" height="31" fill="#e3e3e3"/><rect x="583" y="1093" width="1" height="31" fill="#e3e3e3"/><rect x="628" y="1093" width="1" height="31" fill="#e3e3e3"/><rect x="673" y="1093" width="1" height="31" fill="#e3e3e3"/><rect x="718" y="1093" width="1" height="31" fill="#e3e3e3"/><rect x="763" y="1093" width="1" height="31" fill="#e3e3e3"/><rect x="808" y="1093" width="1" height="31" fill="#e3e3e3"/><rect x="853" y="1093" width="1" height="31" fill="#e3e3e3"/><rect x="898" y="1093" width="1" height="31" fill="#e3e3e3"/><rect x="943" y="1093" width="1" height="31" fill="#e3e3e3"/><rect x="988" y="1093" width="1" height="31" fill="#e3e3e3"/><rect x="1033" y="1093" width="1" height="31" fill="#e3e3e3"/><rect x="1078" y="1093" width="1" height="31" fill="#e3e3e3"/><rect x="1123" y="1093" width="1" height="31" fill="#e3e3e3"/><rect x="1167" y="1093" width="1" height="31" fill="#e3e3e3"/><rect x="1212" y="1093" width="1" height="31" fill="#e3e3e3"/><rect x="1257" y="1093" width="1" height="31" fill="#e3e3e3"/><rect x="1302" y="1093" width="1" height="31" fill="#e3e3e3"/><rect x="1347" y="1093" width="1" height="31" fill="#e3e3e3"/><rect x="1392" y="1093" width="1" height="31" fill="#e3e3e3"/><rect x="1437" y="1093" width="1" height="31" fill="#e3e3e3"/><rect x="1482" y="1093" width="1" height="31" fill="#e3e3e3"/><rect x="1527" y="1093" width="1" height="31" fill="#e3e3e3"/><rect x="1572" y="1093" width="1" height="31" fill="#e3e3e3"/><rect x="1617" y="1093" width="1" height="31" fill="#e3e3e3"/><rect x="1649" y="1093" width="1" height="31" fill="#e3e3e3"/><rect x="224" y="1291" width="1" height="31" fill="#e3e3e3"/><rect x="269" y="1291" width="1" height="31" fill="#e3e3e3"/><rect x="314" y="1291" width="1" height="31" fill="#e3e3e3"/><rect x="359" y="1291" width="1" height="31" fill="#e3e3e3"/><rect x="404" y="1291" width="1" height="31" fill="#e3e3e3"/><rect x="449" y="1291" width="1" height="31" fill="#e3e3e3"/><rect x="494" y="1291" width="1" height="31" fill="#e3e3e3"/><rect x="538" y="1291" width="1" height="31" fill="#e3e3e3"/><rect x="583" y="1291" width="1" height="31" fill="#e3e3e3"/><rect x="628" y="1291" width="1" height="31" fill="#e3e3e3"/><rect x="673" y="1291" width="1" height="31" fill="#e3e3e3"/><rect x="718" y="1291" width="1" height="31" fill="#e3e3e3"/><rect x="763" y="1291" width="1" height="31" fill="#e3e3e3"/><rect x="808" y="1291" width="1" height="31" fill="#e3e3e3"/><rect x="853" y="1291" width="1" height="31" fill="#e3e3e3"/><rect x="898" y="1291" width="1" height="31" fill="#e3e3e3"/><rect x="943" y="1291" width="1" height="31" fill="#e3e3e3"/><rect x="988" y="1291" width="1" height="31" fill="#e3e3e3"/><rect x="1033" y="1291" width="1" height="31" fill="#e3e3e3"/><rect x="1078" y="1291" width="1" height="31" fill="#e3e3e3"/><rect x="1123" y="1291" width="1" height="31" fill="#e3e3e3"/><rect x="1167" y="1291" width="1" height="31" fill="#e3e3e3"/><rect x="1212" y="1291" width="1" height="31" fill="#e3e3e3"/><rect x="1257" y="1291" width="1" height="31" fill="#e3e3e3"/><rect x="1302" y="1291" width="1" height="31" fill="#e3e3e3"/><rect x="1347" y="1291" width="1" height="31" fill="#e3e3e3"/><rect x="1392" y="1291" width="1" height="31" fill="#e3e3e3"/><rect x="1437" y="1291" width="1" height="31" fill="#e3e3e3"/><rect x="1482" y="1291" width="1" height="31" fill="#e3e3e3"/><rect x="1527" y="1291" width="1" height="31" fill="#e3e3e3"/><rect x="1572" y="1291" width="1" height="31" fill="#e3e3e3"/><rect x="1617" y="1291" width="1" height="31" fill="#e3e3e3"/><rect x="1649" y="1291" width="1" height="31" fill="#e3e3e3"/><rect x="224" y="855" width="1" height="12" fill="#e3e3e3"/><rect x="269" y="855" width="1" height="12" fill="#e3e3e3"/><rect x="314" y="855" width="1" height="12" fill="#e3e3e3"/><rect x="359" y="855" width="1" height="12" fill="#e3e3e3"/><rect x="404" y="855" width="1" height="12" fill="#e3e3e3"/><rect x="449" y="855" width="1" height="12" fill="#e3e3e3"/><rect x="494" y="855" width="1" height="12" fill="#e3e3e3"/><rect x="538" y="855" width="1" height="12" fill="#e3e3e3"/><rect x="583" y="855" width="1" height="12" fill="#e3e3e3"/><rect x="628" y="855" width="1" height="12" fill="#e3e3e3"/><rect x="673" y="855" width="1" height="12" fill="#e3e3e3"/><rect x="718" y="855" width="1" height="12" fill="#e3e3e3"/><rect x="763" y="855" width="1" height="12" fill="#e3e3e3"/><rect x="808" y="855" width="1" height="12" fill="#e3e3e3"/><rect x="853" y="855" width="1" height="12" fill="#e3e3e3"/><rect x="898" y="855" width="1" height="12" fill="#e3e3e3"/><rect x="943" y="855" width="1" height="12" fill="#e3e3e3"/><rect x="988" y="855" width="1" height="12" fill="#e3e3e3"/><rect x="1033" y="855" width="1" height="12" fill="#e3e3e3"/><rect x="1078" y="855" width="1" height="12" fill="#e3e3e3"/><rect x="1123" y="855" width="1" height="12" fill="#e3e3e3"/><rect x="1167" y="855" width="1" height="12" fill="#e3e3e3"/><rect x="1212" y="855" width="1" height="12" fill="#e3e3e3"/><rect x="1257" y="855" width="1" height="12" fill="#e3e3e3"/><rect x="1302" y="855" width="1" height="12" fill="#e3e3e3"/><rect x="1347" y="855" width="1" height="12" fill="#e3e3e3"/><rect x="1392" y="855" width="1" height="12" fill="#e3e3e3"/><rect x="1437" y="855" width="1" height="12" fill="#e3e3e3"/><rect x="1482" y="855" width="1" height="12" fill="#e3e3e3"/><rect x="1527" y="855" width="1" height="12" fill="#e3e3e3"/><rect x="1572" y="855" width="1" height="12" fill="#e3e3e3"/><rect x="1617" y="855" width="1" height="12" fill="#e3e3e3"/><rect x="1649" y="855" width="1" height="12" fill="#e3e3e3"/><rect x="224" y="824" width="1" height="31" fill="#e3e3e3"/><rect x="269" y="824" width="1" height="31" fill="#e3e3e3"/><rect x="314" y="824" width="1" height="31" fill="#e3e3e3"/><rect x="359" y="824" width="1" height="31" fill="#e3e3e3"/><rect x="404" y="824" width="1" height="31" fill="#e3e3e3"/><rect x="224" y="824" width="180" height="1" fill="#e3e3e3"/><rect x="224" y="855" width="180" height="1" fill="#e3e3e3"/><rect x="224" y="936" width="180" height="1" fill="#e3e3e3"/><rect x="224" y="970" width="180" height="1" fill="#e3e3e3"/><rect x="224" y="983" width="180" height="1" fill="#e3e3e3"/><rect x="224" y="1020" width="180" height="1" fill="#e3e3e3"/><rect x="224" y="716" width="1425" height="1" fill="#e3e3e3"/><rect x="224" y="747" width="1425" height="1" fill="#e3e3e3"/><rect x="224" y="767" width="1425" height="1" fill="#e3e3e3"/><rect x="404" y="855" width="1245" height="1" fill="#e3e3e3"/><rect x="404" y="970" width="1245" height="1" fill="#e3e3e3"/><rect x="404" y="983" width="1245" height="1" fill="#e3e3e3"/><rect x="404" y="1020" width="1245" height="1" fill="#e3e3e3"/><rect x="404" y="936" width="1245" height="1" fill="#e3e3e3"/><rect x="1650" y="685" width="104" height="1" fill="#e3e3e3"/><rect x="1650" y="716" width="104" height="1" fill="#e3e3e3"/><rect x="1650" y="747" width="104" height="1" fill="#e3e3e3"/><rect x="1650" y="767" width="104" height="1" fill="#e3e3e3"/><rect x="1650" y="824" width="104" height="1" fill="#e3e3e3"/><rect x="1650" y="855" width="104" height="1" fill="#e3e3e3"/><rect x="1650" y="936" width="104" height="1" fill="#e3e3e3"/><rect x="1650" y="970" width="104" height="1" fill="#e3e3e3"/><rect x="1650" y="983" width="104" height="1" fill="#e3e3e3"/><rect x="1650" y="1020" width="104" height="1" fill="#e3e3e3"/><rect x="1650" y="1130" width="104" height="1" fill="#e3e3e3"/><rect x="1650" y="1329" width="104" height="1" fill="#e3e3e3"/><rect x="1650" y="1551" width="104" height="1" fill="#e3e3e3"/><rect x="224" y="623" width="1" height="31" fill="#e3e3e3"/><rect x="269" y="623" width="1" height="31" fill="#e3e3e3"/><rect x="314" y="623" width="1" height="31" fill="#e3e3e3"/><rect x="359" y="623" width="1" height="31" fill="#e3e3e3"/><rect x="415" y="623" width="1" height="31" fill="#e3e3e3"/><rect x="447" y="623" width="1" height="31" fill="#e3e3e3"/><rect x="491" y="623" width="1" height="31" fill="#e3e3e3"/><rect x="537" y="623" width="1" height="31" fill="#e3e3e3"/><rect x="581" y="623" width="1" height="31" fill="#e3e3e3"/><rect x="614" y="623" width="1" height="31" fill="#e3e3e3"/><rect x="647" y="623" width="1" height="31" fill="#e3e3e3"/><rect x="691" y="623" width="1" height="31" fill="#e3e3e3"/><rect x="735" y="623" width="1" height="31" fill="#e3e3e3"/><rect x="778" y="623" width="1" height="31" fill="#e3e3e3"/><rect x="814" y="623" width="1" height="31" fill="#e3e3e3"/><rect x="848" y="623" width="1" height="31" fill="#e3e3e3"/><rect x="883" y="623" width="1" height="31" fill="#e3e3e3"/><rect x="917" y="623" width="1" height="31" fill="#e3e3e3"/><rect x="952" y="623" width="1" height="31" fill="#e3e3e3"/><rect x="988" y="623" width="1" height="31" fill="#e3e3e3"/><rect x="1032" y="623" width="1" height="31" fill="#e3e3e3"/><rect x="1091" y="623" width="1" height="31" fill="#e3e3e3"/><rect x="1441" y="623" width="1" height="31" fill="#e3e3e3"/><rect x="1651" y="623" width="1" height="31" fill="#e3e3e3"/><rect x="1690" y="623" width="1" height="31" fill="#e3e3e3"/><rect x="1690" y="393" width="1" height="230" fill="#e3e3e3"/><rect x="1652" y="430" width="102" height="1" fill="#e3e3e3"/><rect x="1652" y="461" width="102" height="1" fill="#e3e3e3"/><rect x="1652" y="492" width="102" height="1" fill="#e3e3e3"/><rect x="1652" y="529" width="102" height="1" fill="#e3e3e3"/><rect x="1652" y="560" width="102" height="1" fill="#e3e3e3"/><rect x="1652" y="591" width="102" height="1" fill="#e3e3e3"/><rect x="1652" y="623" width="102" height="1" fill="#e3e3e3"/><rect x="224" y="461" width="764" height="1" fill="#e3e3e3"/><rect x="224" y="591" width="764" height="1" fill="#e3e3e3"/><rect x="1091" y="430" width="350" height="1" fill="#e3e3e3"/><rect x="314" y="492" width="1" height="37" fill="#e3e3e3"/><rect x="735" y="492" width="1" height="37" fill="#e3e3e3"/><rect x="224" y="1124" width="1" height="6" fill="#e3e3e3"/><rect x="314" y="1124" width="1" height="6" fill="#e3e3e3"/><rect x="808" y="1124" width="1" height="6" fill="#e3e3e3"/><rect x="915" y="1124" width="1" height="6" fill="#e3e3e3"/><rect x="994" y="1124" width="1" height="6" fill="#e3e3e3"/><rect x="1132" y="1124" width="1" height="6" fill="#e3e3e3"/><rect x="1224" y="1124" width="1" height="6" fill="#e3e3e3"/><rect x="1359" y="1124" width="1" height="6" fill="#e3e3e3"/><rect x="1492" y="1124" width="1" height="6" fill="#e3e3e3"/><rect x="224" y="1167" width="1" height="31" fill="#e3e3e3"/><rect x="314" y="1167" width="1" height="31" fill="#e3e3e3"/><rect x="808" y="1167" width="1" height="31" fill="#e3e3e3"/><rect x="915" y="1167" width="1" height="31" fill="#e3e3e3"/><rect x="994" y="1167" width="1" height="31" fill="#e3e3e3"/><rect x="1132" y="1167" width="1" height="31" fill="#e3e3e3"/><rect x="1224" y="1167" width="1" height="31" fill="#e3e3e3"/><rect x="1359" y="1167" width="1" height="31" fill="#e3e3e3"/><rect x="1492" y="1167" width="1" height="31" fill="#e3e3e3"/><rect x="224" y="1322" width="1" height="7" fill="#e3e3e3"/><rect x="314" y="1322" width="1" height="7" fill="#e3e3e3"/><rect x="808" y="1322" width="1" height="7" fill="#e3e3e3"/><rect x="915" y="1322" width="1" height="7" fill="#e3e3e3"/><rect x="994" y="1322" width="1" height="7" fill="#e3e3e3"/><rect x="1132" y="1322" width="1" height="7" fill="#e3e3e3"/><rect x="1224" y="1322" width="1" height="7" fill="#e3e3e3"/><rect x="1359" y="1322" width="1" height="7" fill="#e3e3e3"/><rect x="1492" y="1322" width="1" height="7" fill="#e3e3e3"/><rect x="224" y="1365" width="1" height="31" fill="#e3e3e3"/><rect x="314" y="1365" width="1" height="31" fill="#e3e3e3"/><rect x="808" y="1365" width="1" height="31" fill="#e3e3e3"/><rect x="915" y="1365" width="1" height="31" fill="#e3e3e3"/><rect x="994" y="1365" width="1" height="31" fill="#e3e3e3"/><rect x="1132" y="1365" width="1" height="31" fill="#e3e3e3"/><rect x="1224" y="1365" width="1" height="31" fill="#e3e3e3"/><rect x="1359" y="1365" width="1" height="31" fill="#e3e3e3"/><rect x="1492" y="1365" width="1" height="31" fill="#e3e3e3"/><rect x="224" y="1229" width="1" height="31" fill="#e3e3e3"/><rect x="314" y="1229" width="1" height="31" fill="#e3e3e3"/><rect x="808" y="1229" width="1" height="31" fill="#e3e3e3"/><rect x="915" y="1229" width="1" height="31" fill="#e3e3e3"/><rect x="1224" y="1229" width="1" height="31" fill="#e3e3e3"/><rect x="224" y="1427" width="1" height="31" fill="#e3e3e3"/><rect x="314" y="1427" width="1" height="31" fill="#e3e3e3"/><rect x="808" y="1427" width="1" height="31" fill="#e3e3e3"/><rect x="915" y="1427" width="1" height="31" fill="#e3e3e3"/><rect x="1224" y="1427" width="1" height="31" fill="#e3e3e3"/><rect x="224" y="1489" width="1" height="31" fill="#e3e3e3"/><rect x="314" y="1489" width="1" height="31" fill="#e3e3e3"/><rect x="808" y="1489" width="1" height="31" fill="#e3e3e3"/><rect x="915" y="1489" width="1" height="31" fill="#e3e3e3"/><rect x="1224" y="1489" width="1" height="31" fill="#e3e3e3"/><rect x="224" y="1551" width="1" height="15" fill="#e3e3e3"/><rect x="314" y="1551" width="1" height="15" fill="#e3e3e3"/><rect x="808" y="1551" width="1" height="15" fill="#e3e3e3"/><rect x="994" y="1551" width="1" height="15" fill="#e3e3e3"/><rect x="1224" y="1551" width="1" height="15" fill="#e3e3e3"/><rect x="224" y="1566" width="1" height="31" fill="#e3e3e3"/><rect x="314" y="1566" width="1" height="31" fill="#e3e3e3"/><rect x="808" y="1566" width="1" height="31" fill="#e3e3e3"/><rect x="994" y="1566" width="1" height="31" fill="#e3e3e3"/><rect x="1224" y="1566" width="1" height="31" fill="#e3e3e3"/><rect x="1280" y="1520" width="1" height="31" fill="#e3e3e3"/><rect x="1359" y="1520" width="1" height="31" fill="#e3e3e3"/><rect x="1492" y="1520" width="1" height="31" fill="#e3e3e3"/><rect x="404" y="787" width="1" height="37" fill="#e3e3e3"/><rect x="404" y="899" width="1" height="37" fill="#e3e3e3"/><rect x="404" y="936" width="1" height="34" fill="#e3e3e3"/><rect x="404" y="983" width="1" height="37" fill="#e3e3e3"/><rect x="1280" y="1198" width="1" height="31" fill="#e3e3e3"/><rect x="1359" y="1198" width="1" height="31" fill="#e3e3e3"/></g>
<g shape-rendering="crispEdges"><rect x="6" y="262" width="1748" height="1" fill="#a6a6a6"/><rect x="6" y="262" width="1" height="1326" fill="#a6a6a6"/><rect x="209" y="262" width="1" height="1326" fill="#a6a6a6"/><rect x="6" y="361" width="1748" height="1" fill="#a6a6a6"/><rect x="136" y="331" width="1618" height="1" fill="#a6a6a6"/><rect x="136" y="331" width="1" height="1257" fill="#a6a6a6"/><rect x="224" y="331" width="1" height="30" fill="#a6a6a6"/><rect x="269" y="331" width="1" height="30" fill="#a6a6a6"/><rect x="314" y="331" width="1" height="30" fill="#a6a6a6"/><rect x="359" y="331" width="1" height="30" fill="#a6a6a6"/><rect x="404" y="331" width="1" height="30" fill="#a6a6a6"/><rect x="449" y="331" width="1" height="30" fill="#a6a6a6"/><rect x="494" y="331" width="1" height="30" fill="#a6a6a6"/><rect x="538" y="331" width="1" height="30" fill="#a6a6a6"/><rect x="583" y="331" width="1" height="30" fill="#a6a6a6"/><rect x="628" y="331" width="1" height="30" fill="#a6a6a6"/><rect x="673" y="331" width="1" height="30" fill="#a6a6a6"/><rect x="718" y="331" width="1" height="30" fill="#a6a6a6"/><rect x="763" y="331" width="1" height="30" fill="#a6a6a6"/><rect x="808" y="331" width="1" height="30" fill="#a6a6a6"/><rect x="853" y="331" width="1" height="30" fill="#a6a6a6"/><rect x="898" y="331" width="1" height="30" fill="#a6a6a6"/><rect x="943" y="331" width="1" height="30" fill="#a6a6a6"/><rect x="988" y="331" width="1" height="30" fill="#a6a6a6"/><rect x="1033" y="331" width="1" height="30" fill="#a6a6a6"/><rect x="1078" y="331" width="1" height="30" fill="#a6a6a6"/><rect x="1123" y="331" width="1" height="30" fill="#a6a6a6"/><rect x="1167" y="331" width="1" height="30" fill="#a6a6a6"/><rect x="1212" y="331" width="1" height="30" fill="#a6a6a6"/><rect x="1257" y="331" width="1" height="30" fill="#a6a6a6"/><rect x="1302" y="331" width="1" height="30" fill="#a6a6a6"/><rect x="1347" y="331" width="1" height="30" fill="#a6a6a6"/><rect x="1392" y="331" width="1" height="30" fill="#a6a6a6"/><rect x="1437" y="331" width="1" height="30" fill="#a6a6a6"/><rect x="1482" y="331" width="1" height="30" fill="#a6a6a6"/><rect x="1527" y="331" width="1" height="30" fill="#a6a6a6"/><rect x="1572" y="331" width="1" height="30" fill="#a6a6a6"/><rect x="1617" y="331" width="1" height="30" fill="#a6a6a6"/><rect x="1649" y="331" width="1" height="30" fill="#a6a6a6"/><rect x="1784" y="331" width="1" height="30" fill="#a6a6a6"/><rect x="136" y="393" width="73" height="1" fill="#a6a6a6"/><rect x="136" y="430" width="73" height="1" fill="#a6a6a6"/><rect x="136" y="461" width="73" height="1" fill="#a6a6a6"/><rect x="136" y="492" width="73" height="1" fill="#a6a6a6"/><rect x="136" y="529" width="73" height="1" fill="#a6a6a6"/><rect x="136" y="560" width="73" height="1" fill="#a6a6a6"/><rect x="136" y="591" width="73" height="1" fill="#a6a6a6"/><rect x="136" y="623" width="73" height="1" fill="#a6a6a6"/><rect x="136" y="654" width="73" height="1" fill="#a6a6a6"/><rect x="136" y="685" width="73" height="1" fill="#a6a6a6"/><rect x="136" y="716" width="73" height="1" fill="#a6a6a6"/><rect x="136" y="747" width="73" height="1" fill="#a6a6a6"/><rect x="136" y="767" width="73" height="1" fill="#a6a6a6"/><rect x="136" y="787" width="73" height="1" fill="#a6a6a6"/><rect x="136" y="824" width="73" height="1" fill="#a6a6a6"/><rect x="136" y="855" width="73" height="1" fill="#a6a6a6"/><rect x="136" y="867" width="73" height="1" fill="#a6a6a6"/><rect x="136" y="899" width="73" height="1" fill="#a6a6a6"/><rect x="136" y="936" width="73" height="1" fill="#a6a6a6"/><rect x="136" y="970" width="73" height="1" fill="#a6a6a6"/><rect x="136" y="983" width="73" height="1" fill="#a6a6a6"/><rect x="136" y="1020" width="73" height="1" fill="#a6a6a6"/><rect x="136" y="1031" width="73" height="1" fill="#a6a6a6"/><rect x="136" y="1062" width="73" height="1" fill="#a6a6a6"/><rect x="136" y="1093" width="73" height="1" fill="#a6a6a6"/><rect x="136" y="1124" width="73" height="1" fill="#a6a6a6"/><rect x="136" y="1130" width="73" height="1" fill="#a6a6a6"/><rect x="136" y="1167" width="73" height="1" fill="#a6a6a6"/><rect x="136" y="1198" width="73" height="1" fill="#a6a6a6"/><rect x="136" y="1229" width="73" height="1" fill="#a6a6a6"/><rect x="136" y="1260" width="73" height="1" fill="#a6a6a6"/><rect x="136" y="1291" width="73" height="1" fill="#a6a6a6"/><rect x="136" y="1322" width="73" height="1" fill="#a6a6a6"/><rect x="136" y="1329" width="73" height="1" fill="#a6a6a6"/><rect x="136" y="1365" width="73" height="1" fill="#a6a6a6"/><rect x="136" y="1396" width="73" height="1" fill="#a6a6a6"/><rect x="136" y="1427" width="73" height="1" fill="#a6a6a6"/><rect x="136" y="1458" width="73" height="1" fill="#a6a6a6"/><rect x="136" y="1489" width="73" height="1" fill="#a6a6a6"/><rect x="136" y="1520" width="73" height="1" fill="#a6a6a6"/><rect x="136" y="1551" width="73" height="1" fill="#a6a6a6"/><rect x="136" y="1566" width="73" height="1" fill="#a6a6a6"/><rect x="10" y="393" width="126" height="1" fill="#a6a6a6"/><rect x="10" y="654" width="126" height="1" fill="#a6a6a6"/><rect x="10" y="393" width="1" height="262" fill="#a6a6a6"/><rect x="10" y="685" width="126" height="1" fill="#a6a6a6"/><rect x="10" y="786" width="126" height="1" fill="#a6a6a6"/><rect x="10" y="685" width="1" height="102" fill="#a6a6a6"/><rect x="10" y="787" width="126" height="1" fill="#a6a6a6"/><rect x="10" y="867" width="126" height="1" fill="#a6a6a6"/><rect x="10" y="787" width="1" height="81" fill="#a6a6a6"/><rect x="10" y="899" width="126" height="1" fill="#a6a6a6"/><rect x="10" y="1031" width="126" height="1" fill="#a6a6a6"/><rect x="10" y="899" width="1" height="133" fill="#a6a6a6"/><rect x="10" y="1062" width="126" height="1" fill="#a6a6a6"/><rect x="10" y="1093" width="126" height="1" fill="#a6a6a6"/><rect x="10" y="1062" width="1" height="32" fill="#a6a6a6"/><rect x="10" y="1124" width="126" height="1" fill="#a6a6a6"/><rect x="10" y="1167" width="126" height="1" fill="#a6a6a6"/><rect x="10" y="1124" width="1" height="44" fill="#a6a6a6"/><rect x="10" y="1198" width="126" height="1" fill="#a6a6a6"/><rect x="10" y="1229" width="126" height="1" fill="#a6a6a6"/><rect x="10" y="1198" width="1" height="32" fill="#a6a6a6"/><rect x="10" y="1260" width="126" height="1" fill="#a6a6a6"/><rect x="10" y="1291" width="126" height="1" fill="#a6a6a6"/><rect x="10" y="1260" width="1" height="32" fill="#a6a6a6"/><rect x="10" y="1322" width="126" height="1" fill="#a6a6a6"/><rect x="10" y="1365" width="126" height="1" fill="#a6a6a6"/><rect x="10" y="1322" width="1" height="44" fill="#a6a6a6"/><rect x="10" y="1396" width="126" height="1" fill="#a6a6a6"/><rect x="10" y="1427" width="126" height="1" fill="#a6a6a6"/><rect x="10" y="1396" width="1" height="32" fill="#a6a6a6"/><rect x="10" y="1458" width="126" height="1" fill="#a6a6a6"/><rect x="10" y="1489" width="126" height="1" fill="#a6a6a6"/><rect x="10" y="1458" width="1" height="32" fill="#a6a6a6"/><rect x="10" y="1520" width="126" height="1" fill="#a6a6a6"/><rect x="10" y="1566" width="126" height="1" fill="#a6a6a6"/><rect x="10" y="1520" width="1" height="47" fill="#a6a6a6"/></g>
<rect x="210" y="332" width="14" height="29" fill="url(#gSel)"/>
<g shape-rendering="crispEdges"><rect x="224" y="393" width="1" height="231" fill="#3a3a3a"/><rect x="224" y="623" width="1428" height="1" fill="#3a3a3a"/><rect x="224" y="492" width="1217" height="1" fill="#3a3a3a"/><rect x="224" y="529" width="764" height="1" fill="#3a3a3a"/><rect x="988" y="430" width="103" height="1" fill="#3a3a3a"/><rect x="646" y="492" width="1" height="38" fill="#3a3a3a"/><rect x="988" y="393" width="1" height="231" fill="#3a3a3a"/><rect x="1091" y="393" width="1" height="231" fill="#3a3a3a"/><rect x="1441" y="393" width="1" height="231" fill="#3a3a3a"/><rect x="1651" y="560" width="1" height="64" fill="#3a3a3a"/><rect x="224" y="767" width="1426" height="2" fill="#2e2e2e"/><rect x="224" y="1130" width="1431" height="2" fill="#2a2a2a"/><rect x="224" y="1130" width="2" height="39" fill="#2a2a2a"/><rect x="1653" y="1130" width="2" height="39" fill="#2a2a2a"/><rect x="314" y="1131" width="1" height="36" fill="#3a3a3a"/><rect x="808" y="1131" width="1" height="36" fill="#3a3a3a"/><rect x="994" y="1131" width="1" height="36" fill="#3a3a3a"/><rect x="1132" y="1131" width="1" height="36" fill="#3a3a3a"/><rect x="1224" y="1131" width="1" height="36" fill="#3a3a3a"/><rect x="1426" y="1131" width="1" height="36" fill="#3a3a3a"/><rect x="224" y="1198" width="2" height="33" fill="#2a2a2a"/><rect x="1653" y="1198" width="2" height="33" fill="#2a2a2a"/><rect x="994" y="1198" width="1" height="31" fill="#3a3a3a"/><rect x="1132" y="1198" width="1" height="31" fill="#3a3a3a"/><rect x="1224" y="1198" width="1" height="31" fill="#3a3a3a"/><rect x="1426" y="1198" width="1" height="31" fill="#3a3a3a"/><rect x="224" y="1260" width="2" height="33" fill="#2a2a2a"/><rect x="1653" y="1260" width="2" height="33" fill="#2a2a2a"/><rect x="314" y="1260" width="1" height="31" fill="#3a3a3a"/><rect x="808" y="1260" width="1" height="31" fill="#3a3a3a"/><rect x="994" y="1260" width="1" height="31" fill="#3a3a3a"/><rect x="1132" y="1260" width="1" height="31" fill="#3a3a3a"/><rect x="1224" y="1260" width="1" height="31" fill="#3a3a3a"/><rect x="1426" y="1260" width="1" height="31" fill="#3a3a3a"/><rect x="224" y="1329" width="1431" height="2" fill="#2a2a2a"/><rect x="224" y="1329" width="2" height="38" fill="#2a2a2a"/><rect x="1653" y="1329" width="2" height="38" fill="#2a2a2a"/><rect x="314" y="1330" width="1" height="35" fill="#3a3a3a"/><rect x="808" y="1330" width="1" height="35" fill="#3a3a3a"/><rect x="994" y="1330" width="1" height="35" fill="#3a3a3a"/><rect x="1132" y="1330" width="1" height="35" fill="#3a3a3a"/><rect x="1224" y="1330" width="1" height="35" fill="#3a3a3a"/><rect x="1359" y="1330" width="1" height="35" fill="#3a3a3a"/><rect x="1492" y="1330" width="1" height="35" fill="#3a3a3a"/><rect x="224" y="1396" width="2" height="33" fill="#2a2a2a"/><rect x="1653" y="1396" width="2" height="33" fill="#2a2a2a"/><rect x="994" y="1396" width="1" height="31" fill="#3a3a3a"/><rect x="1224" y="1396" width="1" height="31" fill="#3a3a3a"/><rect x="224" y="1458" width="2" height="33" fill="#2a2a2a"/><rect x="1653" y="1458" width="2" height="33" fill="#2a2a2a"/><rect x="314" y="1458" width="1" height="31" fill="#3a3a3a"/><rect x="808" y="1458" width="1" height="31" fill="#3a3a3a"/><rect x="994" y="1458" width="1" height="31" fill="#3a3a3a"/><rect x="1132" y="1458" width="1" height="31" fill="#3a3a3a"/><rect x="1224" y="1458" width="1" height="31" fill="#3a3a3a"/><rect x="1359" y="1458" width="1" height="31" fill="#3a3a3a"/><rect x="1492" y="1458" width="1" height="31" fill="#3a3a3a"/><rect x="224" y="1520" width="1431" height="2" fill="#2a2a2a"/><rect x="224" y="1551" width="1431" height="2" fill="#2a2a2a"/><rect x="224" y="1520" width="2" height="33" fill="#2a2a2a"/><rect x="1653" y="1520" width="2" height="33" fill="#2a2a2a"/><rect x="994" y="1521" width="1" height="30" fill="#3a3a3a"/><rect x="1132" y="1521" width="1" height="30" fill="#3a3a3a"/></g>
<g shape-rendering="crispEdges" stroke="#3c3c3c" stroke-width="1" stroke-dasharray="7 1" fill="none"><path d="M1649.5 361V393"/><path d="M1651.5 393V654"/><path d="M1649.5 654V1124"/><path d="M1653.5 1124V1291"/><path d="M1649.5 1291V1322"/><path d="M1653.5 1322V1588"/></g>
<g shape-rendering="crispEdges"><rect x="136" y="393" width="1618" height="1" fill="#ff0000"/><rect x="136" y="654" width="1618" height="1" fill="#ff0000"/><rect x="136" y="685" width="1618" height="1" fill="#ff0000"/><rect x="136" y="787" width="1618" height="1" fill="#ff0000"/><rect x="136" y="867" width="1618" height="1" fill="#ff0000"/><rect x="136" y="899" width="1618" height="1" fill="#ff0000"/><rect x="136" y="1031" width="1618" height="1" fill="#ff0000"/><rect x="136" y="1062" width="1618" height="1" fill="#ff0000"/><rect x="136" y="1093" width="1618" height="1" fill="#ff0000"/><rect x="136" y="1124" width="1618" height="1" fill="#ff0000"/><rect x="136" y="1167" width="1618" height="1" fill="#ff0000"/><rect x="136" y="1198" width="1618" height="1" fill="#ff0000"/><rect x="136" y="1229" width="1618" height="1" fill="#ff0000"/><rect x="136" y="1260" width="1618" height="1" fill="#ff0000"/><rect x="136" y="1291" width="1618" height="1" fill="#ff0000"/><rect x="136" y="1322" width="1618" height="1" fill="#ff0000"/><rect x="136" y="1365" width="1618" height="1" fill="#ff0000"/><rect x="136" y="1396" width="1618" height="1" fill="#ff0000"/><rect x="136" y="1427" width="1618" height="1" fill="#ff0000"/><rect x="136" y="1458" width="1618" height="1" fill="#ff0000"/><rect x="136" y="1489" width="1618" height="1" fill="#ff0000"/><rect x="136" y="1520" width="1618" height="1" fill="#ff0000"/><rect x="136" y="1566" width="1618" height="1" fill="#ff0000"/></g>
<rect x="1442.7" y="395.1" width="209" height="165.2" rx="2.5" fill="#fff"/>
<rect x="1442.7" y="395.1" width="209" height="165.2" rx="2.5" fill="url(#hatch)" stroke="#4c4cff" stroke-width="2"/>
<path d="M1451.30 403.10h14.95v2.14h-14.95zM1472.66 403.10h6.41v2.14h-6.41zM1483.34 403.10h2.14v2.14h-2.14zM1494.02 403.10h4.27v2.14h-4.27zM1500.43 403.10h8.54v2.14h-8.54zM1511.11 403.10h2.14v2.14h-2.14zM1523.93 403.10h4.27v2.14h-4.27zM1536.75 403.10h8.54v2.14h-8.54zM1547.43 403.10h2.14v2.14h-2.14zM1551.70 403.10h2.14v2.14h-2.14zM1558.11 403.10h4.27v2.14h-4.27zM1568.79 403.10h4.27v2.14h-4.27zM1577.34 403.10h4.27v2.14h-4.27zM1583.75 403.10h14.95v2.14h-14.95zM1451.30 405.24h2.14v2.14h-2.14zM1464.12 405.24h2.14v2.14h-2.14zM1468.39 405.24h6.41v2.14h-6.41zM1479.07 405.24h2.14v2.14h-2.14zM1483.34 405.24h4.27v2.14h-4.27zM1491.89 405.24h2.14v2.14h-2.14zM1496.16 405.24h4.27v2.14h-4.27zM1502.57 405.24h8.54v2.14h-8.54zM1513.25 405.24h2.14v2.14h-2.14zM1517.52 405.24h4.27v2.14h-4.27zM1530.34 405.24h4.27v2.14h-4.27zM1538.89 405.24h4.27v2.14h-4.27zM1547.43 405.24h2.14v2.14h-2.14zM1555.98 405.24h6.41v2.14h-6.41zM1564.52 405.24h2.14v2.14h-2.14zM1568.79 405.24h2.14v2.14h-2.14zM1575.20 405.24h4.27v2.14h-4.27zM1583.75 405.24h2.14v2.14h-2.14zM1596.56 405.24h2.14v2.14h-2.14zM1451.30 407.37h2.14v2.14h-2.14zM1455.57 407.37h6.41v2.14h-6.41zM1464.12 407.37h2.14v2.14h-2.14zM1468.39 407.37h2.14v2.14h-2.14zM1481.21 407.37h6.41v2.14h-6.41zM1494.02 407.37h2.14v2.14h-2.14zM1502.57 407.37h2.14v2.14h-2.14zM1506.84 407.37h2.14v2.14h-2.14zM1523.93 407.37h2.14v2.14h-2.14zM1532.48 407.37h2.14v2.14h-2.14zM1543.16 407.37h2.14v2.14h-2.14zM1549.57 407.37h2.14v2.14h-2.14zM1560.25 407.37h2.14v2.14h-2.14zM1566.66 407.37h2.14v2.14h-2.14zM1570.93 407.37h2.14v2.14h-2.14zM1575.20 407.37h2.14v2.14h-2.14zM1583.75 407.37h2.14v2.14h-2.14zM1588.02 407.37h6.41v2.14h-6.41zM1596.56 407.37h2.14v2.14h-2.14zM1451.30 409.51h2.14v2.14h-2.14zM1455.57 409.51h6.41v2.14h-6.41zM1464.12 409.51h2.14v2.14h-2.14zM1470.53 409.51h4.27v2.14h-4.27zM1481.21 409.51h2.14v2.14h-2.14zM1485.48 409.51h4.27v2.14h-4.27zM1500.43 409.51h12.82v2.14h-12.82zM1517.52 409.51h2.14v2.14h-2.14zM1523.93 409.51h6.41v2.14h-6.41zM1532.48 409.51h2.14v2.14h-2.14zM1538.89 409.51h2.14v2.14h-2.14zM1543.16 409.51h8.54v2.14h-8.54zM1553.84 409.51h6.41v2.14h-6.41zM1562.38 409.51h2.14v2.14h-2.14zM1575.20 409.51h2.14v2.14h-2.14zM1579.47 409.51h2.14v2.14h-2.14zM1583.75 409.51h2.14v2.14h-2.14zM1588.02 409.51h6.41v2.14h-6.41zM1596.56 409.51h2.14v2.14h-2.14zM1451.30 411.64h2.14v2.14h-2.14zM1455.57 411.64h6.41v2.14h-6.41zM1464.12 411.64h2.14v2.14h-2.14zM1468.39 411.64h4.27v2.14h-4.27zM1476.93 411.64h2.14v2.14h-2.14zM1491.89 411.64h2.14v2.14h-2.14zM1502.57 411.64h2.14v2.14h-2.14zM1515.39 411.64h2.14v2.14h-2.14zM1519.66 411.64h10.68v2.14h-10.68zM1534.61 411.64h2.14v2.14h-2.14zM1538.89 411.64h2.14v2.14h-2.14zM1543.16 411.64h4.27v2.14h-4.27zM1549.57 411.64h4.27v2.14h-4.27zM1568.79 411.64h4.27v2.14h-4.27zM1575.20 411.64h2.14v2.14h-2.14zM1583.75 411.64h2.14v2.14h-2.14zM1588.02 411.64h6.41v2.14h-6.41zM1596.56 411.64h2.14v2.14h-2.14zM1451.30 413.78h2.14v2.14h-2.14zM1464.12 413.78h2.14v2.14h-2.14zM1468.39 413.78h2.14v2.14h-2.14zM1474.80 413.78h2.14v2.14h-2.14zM1485.48 413.78h2.14v2.14h-2.14zM1489.75 413.78h2.14v2.14h-2.14zM1496.16 413.78h2.14v2.14h-2.14zM1500.43 413.78h4.27v2.14h-4.27zM1511.11 413.78h4.27v2.14h-4.27zM1519.66 413.78h2.14v2.14h-2.14zM1528.20 413.78h2.14v2.14h-2.14zM1532.48 413.78h4.27v2.14h-4.27zM1538.89 413.78h2.14v2.14h-2.14zM1543.16 413.78h2.14v2.14h-2.14zM1547.43 413.78h4.27v2.14h-4.27zM1553.84 413.78h6.41v2.14h-6.41zM1562.38 413.78h4.27v2.14h-4.27zM1579.47 413.78h2.14v2.14h-2.14zM1583.75 413.78h2.14v2.14h-2.14zM1596.56 413.78h2.14v2.14h-2.14zM1451.30 415.92h14.95v2.14h-14.95zM1468.39 415.92h2.14v2.14h-2.14zM1472.66 415.92h2.14v2.14h-2.14zM1476.93 415.92h2.14v2.14h-2.14zM1481.21 415.92h2.14v2.14h-2.14zM1485.48 415.92h2.14v2.14h-2.14zM1489.75 415.92h2.14v2.14h-2.14zM1494.02 415.92h2.14v2.14h-2.14zM1498.30 415.92h2.14v2.14h-2.14zM1502.57 415.92h2.14v2.14h-2.14zM1506.84 415.92h2.14v2.14h-2.14zM1511.11 415.92h2.14v2.14h-2.14zM1515.39 415.92h2.14v2.14h-2.14zM1519.66 415.92h2.14v2.14h-2.14zM1523.93 415.92h2.14v2.14h-2.14zM1528.20 415.92h2.14v2.14h-2.14zM1532.48 415.92h2.14v2.14h-2.14zM1536.75 415.92h2.14v2.14h-2.14zM1541.02 415.92h2.14v2.14h-2.14zM1545.29 415.92h2.14v2.14h-2.14zM1549.57 415.92h2.14v2.14h-2.14zM1553.84 415.92h2.14v2.14h-2.14zM1558.11 415.92h2.14v2.14h-2.14zM1562.38 415.92h2.14v2.14h-2.14zM1566.66 415.92h2.14v2.14h-2.14zM1570.93 415.92h2.14v2.14h-2.14zM1575.20 415.92h2.14v2.14h-2.14zM1579.47 415.92h2.14v2.14h-2.14zM1583.75 415.92h14.95v2.14h-14.95zM1468.39 418.05h2.14v2.14h-2.14zM1472.66 418.05h4.27v2.14h-4.27zM1479.07 418.05h4.27v2.14h-4.27zM1487.62 418.05h2.14v2.14h-2.14zM1494.02 418.05h2.14v2.14h-2.14zM1502.57 418.05h2.14v2.14h-2.14zM1515.39 418.05h2.14v2.14h-2.14zM1519.66 418.05h2.14v2.14h-2.14zM1528.20 418.05h8.54v2.14h-8.54zM1553.84 418.05h2.14v2.14h-2.14zM1560.25 418.05h2.14v2.14h-2.14zM1564.52 418.05h2.14v2.14h-2.14zM1568.79 418.05h2.14v2.14h-2.14zM1575.20 418.05h2.14v2.14h-2.14zM1579.47 418.05h2.14v2.14h-2.14zM1451.30 420.19h10.68v2.14h-10.68zM1464.12 420.19h2.14v2.14h-2.14zM1470.53 420.19h2.14v2.14h-2.14zM1476.93 420.19h2.14v2.14h-2.14zM1481.21 420.19h2.14v2.14h-2.14zM1487.62 420.19h2.14v2.14h-2.14zM1504.71 420.19h2.14v2.14h-2.14zM1508.98 420.19h6.41v2.14h-6.41zM1517.52 420.19h14.95v2.14h-14.95zM1543.16 420.19h4.27v2.14h-4.27zM1553.84 420.19h4.27v2.14h-4.27zM1568.79 420.19h4.27v2.14h-4.27zM1579.47 420.19h8.54v2.14h-8.54zM1590.16 420.19h2.14v2.14h-2.14zM1594.43 420.19h4.27v2.14h-4.27zM1457.71 422.33h2.14v2.14h-2.14zM1461.98 422.33h2.14v2.14h-2.14zM1470.53 422.33h4.27v2.14h-4.27zM1481.21 422.33h6.41v2.14h-6.41zM1489.75 422.33h2.14v2.14h-2.14zM1496.16 422.33h2.14v2.14h-2.14zM1504.71 422.33h6.41v2.14h-6.41zM1513.25 422.33h4.27v2.14h-4.27zM1523.93 422.33h2.14v2.14h-2.14zM1528.20 422.33h4.27v2.14h-4.27zM1534.61 422.33h4.27v2.14h-4.27zM1543.16 422.33h6.41v2.14h-6.41zM1551.70 422.33h4.27v2.14h-4.27zM1566.66 422.33h2.14v2.14h-2.14zM1570.93 422.33h6.41v2.14h-6.41zM1581.61 422.33h14.95v2.14h-14.95zM1459.84 424.46h2.14v2.14h-2.14zM1464.12 424.46h6.41v2.14h-6.41zM1483.34 424.46h2.14v2.14h-2.14zM1489.75 424.46h4.27v2.14h-4.27zM1498.30 424.46h2.14v2.14h-2.14zM1502.57 424.46h2.14v2.14h-2.14zM1508.98 424.46h4.27v2.14h-4.27zM1519.66 424.46h4.27v2.14h-4.27zM1538.89 424.46h2.14v2.14h-2.14zM1564.52 424.46h6.41v2.14h-6.41zM1575.20 424.46h10.68v2.14h-10.68zM1588.02 424.46h6.41v2.14h-6.41zM1451.30 426.60h6.41v2.14h-6.41zM1461.98 426.60h2.14v2.14h-2.14zM1466.25 426.60h6.41v2.14h-6.41zM1476.93 426.60h8.54v2.14h-8.54zM1487.62 426.60h2.14v2.14h-2.14zM1496.16 426.60h2.14v2.14h-2.14zM1502.57 426.60h2.14v2.14h-2.14zM1511.11 426.60h4.27v2.14h-4.27zM1519.66 426.60h2.14v2.14h-2.14zM1526.07 426.60h2.14v2.14h-2.14zM1532.48 426.60h4.27v2.14h-4.27zM1538.89 426.60h2.14v2.14h-2.14zM1547.43 426.60h8.54v2.14h-8.54zM1564.52 426.60h2.14v2.14h-2.14zM1568.79 426.60h2.14v2.14h-2.14zM1573.07 426.60h2.14v2.14h-2.14zM1581.61 426.60h4.27v2.14h-4.27zM1588.02 426.60h2.14v2.14h-2.14zM1453.44 428.73h2.14v2.14h-2.14zM1457.71 428.73h2.14v2.14h-2.14zM1461.98 428.73h6.41v2.14h-6.41zM1472.66 428.73h2.14v2.14h-2.14zM1476.93 428.73h8.54v2.14h-8.54zM1489.75 428.73h2.14v2.14h-2.14zM1494.02 428.73h4.27v2.14h-4.27zM1506.84 428.73h4.27v2.14h-4.27zM1513.25 428.73h2.14v2.14h-2.14zM1517.52 428.73h4.27v2.14h-4.27zM1526.07 428.73h2.14v2.14h-2.14zM1530.34 428.73h4.27v2.14h-4.27zM1536.75 428.73h6.41v2.14h-6.41zM1545.29 428.73h4.27v2.14h-4.27zM1551.70 428.73h2.14v2.14h-2.14zM1560.25 428.73h2.14v2.14h-2.14zM1564.52 428.73h6.41v2.14h-6.41zM1575.20 428.73h4.27v2.14h-4.27zM1583.75 428.73h12.82v2.14h-12.82zM1451.30 430.87h2.14v2.14h-2.14zM1461.98 430.87h2.14v2.14h-2.14zM1466.25 430.87h6.41v2.14h-6.41zM1483.34 430.87h6.41v2.14h-6.41zM1491.89 430.87h4.27v2.14h-4.27zM1504.71 430.87h2.14v2.14h-2.14zM1513.25 430.87h2.14v2.14h-2.14zM1517.52 430.87h2.14v2.14h-2.14zM1530.34 430.87h2.14v2.14h-2.14zM1536.75 430.87h6.41v2.14h-6.41zM1547.43 430.87h2.14v2.14h-2.14zM1551.70 430.87h2.14v2.14h-2.14zM1555.98 430.87h2.14v2.14h-2.14zM1560.25 430.87h2.14v2.14h-2.14zM1570.93 430.87h2.14v2.14h-2.14zM1581.61 430.87h2.14v2.14h-2.14zM1585.88 430.87h2.14v2.14h-2.14zM1590.16 430.87h2.14v2.14h-2.14zM1596.56 430.87h2.14v2.14h-2.14zM1453.44 433.01h6.41v2.14h-6.41zM1464.12 433.01h4.27v2.14h-4.27zM1472.66 433.01h2.14v2.14h-2.14zM1479.07 433.01h4.27v2.14h-4.27zM1485.48 433.01h4.27v2.14h-4.27zM1491.89 433.01h2.14v2.14h-2.14zM1496.16 433.01h2.14v2.14h-2.14zM1500.43 433.01h2.14v2.14h-2.14zM1504.71 433.01h2.14v2.14h-2.14zM1508.98 433.01h2.14v2.14h-2.14zM1517.52 433.01h2.14v2.14h-2.14zM1536.75 433.01h4.27v2.14h-4.27zM1549.57 433.01h2.14v2.14h-2.14zM1553.84 433.01h4.27v2.14h-4.27zM1568.79 433.01h2.14v2.14h-2.14zM1573.07 433.01h6.41v2.14h-6.41zM1581.61 433.01h4.27v2.14h-4.27zM1590.16 433.01h8.54v2.14h-8.54zM1451.30 435.14h2.14v2.14h-2.14zM1461.98 435.14h2.14v2.14h-2.14zM1466.25 435.14h2.14v2.14h-2.14zM1474.80 435.14h2.14v2.14h-2.14zM1479.07 435.14h2.14v2.14h-2.14zM1485.48 435.14h10.68v2.14h-10.68zM1500.43 435.14h4.27v2.14h-4.27zM1506.84 435.14h4.27v2.14h-4.27zM1513.25 435.14h2.14v2.14h-2.14zM1523.93 435.14h4.27v2.14h-4.27zM1532.48 435.14h2.14v2.14h-2.14zM1536.75 435.14h2.14v2.14h-2.14zM1541.02 435.14h2.14v2.14h-2.14zM1547.43 435.14h2.14v2.14h-2.14zM1551.70 435.14h2.14v2.14h-2.14zM1555.98 435.14h4.27v2.14h-4.27zM1562.38 435.14h2.14v2.14h-2.14zM1570.93 435.14h2.14v2.14h-2.14zM1577.34 435.14h8.54v2.14h-8.54zM1588.02 435.14h6.41v2.14h-6.41zM1451.30 437.28h2.14v2.14h-2.14zM1459.84 437.28h6.41v2.14h-6.41zM1468.39 437.28h2.14v2.14h-2.14zM1472.66 437.28h2.14v2.14h-2.14zM1476.93 437.28h2.14v2.14h-2.14zM1483.34 437.28h2.14v2.14h-2.14zM1487.62 437.28h4.27v2.14h-4.27zM1494.02 437.28h4.27v2.14h-4.27zM1500.43 437.28h4.27v2.14h-4.27zM1506.84 437.28h2.14v2.14h-2.14zM1513.25 437.28h2.14v2.14h-2.14zM1519.66 437.28h2.14v2.14h-2.14zM1526.07 437.28h2.14v2.14h-2.14zM1532.48 437.28h2.14v2.14h-2.14zM1551.70 437.28h2.14v2.14h-2.14zM1555.98 437.28h2.14v2.14h-2.14zM1560.25 437.28h4.27v2.14h-4.27zM1570.93 437.28h2.14v2.14h-2.14zM1575.20 437.28h2.14v2.14h-2.14zM1581.61 437.28h2.14v2.14h-2.14zM1592.29 437.28h6.41v2.14h-6.41zM1453.44 439.42h6.41v2.14h-6.41zM1461.98 439.42h2.14v2.14h-2.14zM1472.66 439.42h10.68v2.14h-10.68zM1487.62 439.42h2.14v2.14h-2.14zM1491.89 439.42h2.14v2.14h-2.14zM1496.16 439.42h6.41v2.14h-6.41zM1508.98 439.42h8.54v2.14h-8.54zM1519.66 439.42h2.14v2.14h-2.14zM1528.20 439.42h4.27v2.14h-4.27zM1534.61 439.42h4.27v2.14h-4.27zM1541.02 439.42h12.82v2.14h-12.82zM1560.25 439.42h4.27v2.14h-4.27zM1566.66 439.42h2.14v2.14h-2.14zM1573.07 439.42h4.27v2.14h-4.27zM1581.61 439.42h4.27v2.14h-4.27zM1588.02 439.42h4.27v2.14h-4.27zM1455.57 441.55h2.14v2.14h-2.14zM1459.84 441.55h2.14v2.14h-2.14zM1464.12 441.55h6.41v2.14h-6.41zM1472.66 441.55h6.41v2.14h-6.41zM1481.21 441.55h4.27v2.14h-4.27zM1491.89 441.55h6.41v2.14h-6.41zM1500.43 441.55h12.82v2.14h-12.82zM1517.52 441.55h6.41v2.14h-6.41zM1526.07 441.55h2.14v2.14h-2.14zM1534.61 441.55h8.54v2.14h-8.54zM1545.29 441.55h2.14v2.14h-2.14zM1551.70 441.55h10.68v2.14h-10.68zM1564.52 441.55h6.41v2.14h-6.41zM1573.07 441.55h2.14v2.14h-2.14zM1577.34 441.55h2.14v2.14h-2.14zM1583.75 441.55h6.41v2.14h-6.41zM1592.29 441.55h4.27v2.14h-4.27zM1451.30 443.69h12.82v2.14h-12.82zM1472.66 443.69h2.14v2.14h-2.14zM1479.07 443.69h2.14v2.14h-2.14zM1489.75 443.69h2.14v2.14h-2.14zM1494.02 443.69h12.82v2.14h-12.82zM1508.98 443.69h6.41v2.14h-6.41zM1517.52 443.69h2.14v2.14h-2.14zM1521.80 443.69h10.68v2.14h-10.68zM1541.02 443.69h12.82v2.14h-12.82zM1560.25 443.69h8.54v2.14h-8.54zM1573.07 443.69h2.14v2.14h-2.14zM1577.34 443.69h2.14v2.14h-2.14zM1585.88 443.69h2.14v2.14h-2.14zM1451.30 445.82h6.41v2.14h-6.41zM1461.98 445.82h8.54v2.14h-8.54zM1472.66 445.82h4.27v2.14h-4.27zM1479.07 445.82h6.41v2.14h-6.41zM1487.62 445.82h4.27v2.14h-4.27zM1494.02 445.82h4.27v2.14h-4.27zM1513.25 445.82h4.27v2.14h-4.27zM1519.66 445.82h2.14v2.14h-2.14zM1532.48 445.82h2.14v2.14h-2.14zM1541.02 445.82h4.27v2.14h-4.27zM1549.57 445.82h8.54v2.14h-8.54zM1560.25 445.82h8.54v2.14h-8.54zM1570.93 445.82h4.27v2.14h-4.27zM1579.47 445.82h2.14v2.14h-2.14zM1585.88 445.82h4.27v2.14h-4.27zM1594.43 445.82h2.14v2.14h-2.14zM1451.30 447.96h2.14v2.14h-2.14zM1455.57 447.96h4.27v2.14h-4.27zM1468.39 447.96h2.14v2.14h-2.14zM1479.07 447.96h4.27v2.14h-4.27zM1485.48 447.96h6.41v2.14h-6.41zM1498.30 447.96h2.14v2.14h-2.14zM1502.57 447.96h2.14v2.14h-2.14zM1506.84 447.96h2.14v2.14h-2.14zM1513.25 447.96h2.14v2.14h-2.14zM1517.52 447.96h6.41v2.14h-6.41zM1528.20 447.96h6.41v2.14h-6.41zM1538.89 447.96h4.27v2.14h-4.27zM1547.43 447.96h4.27v2.14h-4.27zM1558.11 447.96h2.14v2.14h-2.14zM1566.66 447.96h6.41v2.14h-6.41zM1575.20 447.96h2.14v2.14h-2.14zM1579.47 447.96h6.41v2.14h-6.41zM1588.02 447.96h2.14v2.14h-2.14zM1592.29 447.96h4.27v2.14h-4.27zM1451.30 450.10h8.54v2.14h-8.54zM1461.98 450.10h6.41v2.14h-6.41zM1472.66 450.10h2.14v2.14h-2.14zM1479.07 450.10h2.14v2.14h-2.14zM1483.34 450.10h4.27v2.14h-4.27zM1494.02 450.10h2.14v2.14h-2.14zM1502.57 450.10h2.14v2.14h-2.14zM1508.98 450.10h12.82v2.14h-12.82zM1523.93 450.10h2.14v2.14h-2.14zM1528.20 450.10h4.27v2.14h-4.27zM1534.61 450.10h2.14v2.14h-2.14zM1545.29 450.10h2.14v2.14h-2.14zM1555.98 450.10h2.14v2.14h-2.14zM1560.25 450.10h2.14v2.14h-2.14zM1564.52 450.10h2.14v2.14h-2.14zM1568.79 450.10h2.14v2.14h-2.14zM1573.07 450.10h6.41v2.14h-6.41zM1583.75 450.10h2.14v2.14h-2.14zM1588.02 450.10h4.27v2.14h-4.27zM1594.43 450.10h4.27v2.14h-4.27zM1451.30 452.23h2.14v2.14h-2.14zM1455.57 452.23h2.14v2.14h-2.14zM1466.25 452.23h10.68v2.14h-10.68zM1479.07 452.23h4.27v2.14h-4.27zM1487.62 452.23h2.14v2.14h-2.14zM1491.89 452.23h2.14v2.14h-2.14zM1496.16 452.23h2.14v2.14h-2.14zM1500.43 452.23h2.14v2.14h-2.14zM1504.71 452.23h4.27v2.14h-4.27zM1511.11 452.23h4.27v2.14h-4.27zM1519.66 452.23h6.41v2.14h-6.41zM1528.20 452.23h2.14v2.14h-2.14zM1532.48 452.23h2.14v2.14h-2.14zM1536.75 452.23h2.14v2.14h-2.14zM1551.70 452.23h2.14v2.14h-2.14zM1558.11 452.23h2.14v2.14h-2.14zM1562.38 452.23h6.41v2.14h-6.41zM1575.20 452.23h2.14v2.14h-2.14zM1579.47 452.23h2.14v2.14h-2.14zM1588.02 452.23h2.14v2.14h-2.14zM1596.56 452.23h2.14v2.14h-2.14zM1455.57 454.37h2.14v2.14h-2.14zM1459.84 454.37h2.14v2.14h-2.14zM1464.12 454.37h4.27v2.14h-4.27zM1483.34 454.37h2.14v2.14h-2.14zM1489.75 454.37h2.14v2.14h-2.14zM1494.02 454.37h2.14v2.14h-2.14zM1500.43 454.37h4.27v2.14h-4.27zM1506.84 454.37h2.14v2.14h-2.14zM1515.39 454.37h2.14v2.14h-2.14zM1530.34 454.37h10.68v2.14h-10.68zM1545.29 454.37h6.41v2.14h-6.41zM1558.11 454.37h2.14v2.14h-2.14zM1562.38 454.37h2.14v2.14h-2.14zM1570.93 454.37h2.14v2.14h-2.14zM1575.20 454.37h8.54v2.14h-8.54zM1585.88 454.37h2.14v2.14h-2.14zM1592.29 454.37h4.27v2.14h-4.27zM1453.44 456.51h4.27v2.14h-4.27zM1461.98 456.51h2.14v2.14h-2.14zM1472.66 456.51h8.54v2.14h-8.54zM1483.34 456.51h2.14v2.14h-2.14zM1487.62 456.51h4.27v2.14h-4.27zM1496.16 456.51h2.14v2.14h-2.14zM1500.43 456.51h2.14v2.14h-2.14zM1504.71 456.51h2.14v2.14h-2.14zM1508.98 456.51h2.14v2.14h-2.14zM1515.39 456.51h2.14v2.14h-2.14zM1519.66 456.51h2.14v2.14h-2.14zM1526.07 456.51h10.68v2.14h-10.68zM1538.89 456.51h2.14v2.14h-2.14zM1545.29 456.51h6.41v2.14h-6.41zM1553.84 456.51h6.41v2.14h-6.41zM1568.79 456.51h2.14v2.14h-2.14zM1573.07 456.51h6.41v2.14h-6.41zM1583.75 456.51h2.14v2.14h-2.14zM1590.16 456.51h2.14v2.14h-2.14zM1596.56 456.51h2.14v2.14h-2.14zM1453.44 458.64h2.14v2.14h-2.14zM1464.12 458.64h4.27v2.14h-4.27zM1476.93 458.64h2.14v2.14h-2.14zM1481.21 458.64h2.14v2.14h-2.14zM1485.48 458.64h2.14v2.14h-2.14zM1489.75 458.64h8.54v2.14h-8.54zM1500.43 458.64h4.27v2.14h-4.27zM1511.11 458.64h2.14v2.14h-2.14zM1519.66 458.64h2.14v2.14h-2.14zM1523.93 458.64h2.14v2.14h-2.14zM1532.48 458.64h4.27v2.14h-4.27zM1541.02 458.64h2.14v2.14h-2.14zM1545.29 458.64h2.14v2.14h-2.14zM1549.57 458.64h2.14v2.14h-2.14zM1553.84 458.64h4.27v2.14h-4.27zM1560.25 458.64h2.14v2.14h-2.14zM1564.52 458.64h10.68v2.14h-10.68zM1577.34 458.64h2.14v2.14h-2.14zM1581.61 458.64h2.14v2.14h-2.14zM1585.88 458.64h2.14v2.14h-2.14zM1592.29 458.64h2.14v2.14h-2.14zM1453.44 460.78h6.41v2.14h-6.41zM1466.25 460.78h2.14v2.14h-2.14zM1470.53 460.78h6.41v2.14h-6.41zM1483.34 460.78h10.68v2.14h-10.68zM1496.16 460.78h2.14v2.14h-2.14zM1513.25 460.78h4.27v2.14h-4.27zM1519.66 460.78h6.41v2.14h-6.41zM1528.20 460.78h8.54v2.14h-8.54zM1538.89 460.78h2.14v2.14h-2.14zM1545.29 460.78h10.68v2.14h-10.68zM1558.11 460.78h2.14v2.14h-2.14zM1564.52 460.78h4.27v2.14h-4.27zM1570.93 460.78h2.14v2.14h-2.14zM1577.34 460.78h2.14v2.14h-2.14zM1581.61 460.78h4.27v2.14h-4.27zM1590.16 460.78h2.14v2.14h-2.14zM1451.30 462.91h8.54v2.14h-8.54zM1461.98 462.91h8.54v2.14h-8.54zM1472.66 462.91h2.14v2.14h-2.14zM1479.07 462.91h4.27v2.14h-4.27zM1489.75 462.91h2.14v2.14h-2.14zM1494.02 462.91h2.14v2.14h-2.14zM1504.71 462.91h2.14v2.14h-2.14zM1513.25 462.91h2.14v2.14h-2.14zM1517.52 462.91h2.14v2.14h-2.14zM1526.07 462.91h2.14v2.14h-2.14zM1530.34 462.91h2.14v2.14h-2.14zM1534.61 462.91h10.68v2.14h-10.68zM1547.43 462.91h4.27v2.14h-4.27zM1558.11 462.91h6.41v2.14h-6.41zM1570.93 462.91h4.27v2.14h-4.27zM1579.47 462.91h2.14v2.14h-2.14zM1585.88 462.91h6.41v2.14h-6.41zM1453.44 465.05h2.14v2.14h-2.14zM1457.71 465.05h2.14v2.14h-2.14zM1461.98 465.05h2.14v2.14h-2.14zM1466.25 465.05h8.54v2.14h-8.54zM1479.07 465.05h2.14v2.14h-2.14zM1485.48 465.05h2.14v2.14h-2.14zM1494.02 465.05h2.14v2.14h-2.14zM1498.30 465.05h4.27v2.14h-4.27zM1506.84 465.05h4.27v2.14h-4.27zM1513.25 465.05h2.14v2.14h-2.14zM1517.52 465.05h2.14v2.14h-2.14zM1528.20 465.05h2.14v2.14h-2.14zM1532.48 465.05h2.14v2.14h-2.14zM1536.75 465.05h4.27v2.14h-4.27zM1543.16 465.05h2.14v2.14h-2.14zM1551.70 465.05h4.27v2.14h-4.27zM1562.38 465.05h2.14v2.14h-2.14zM1566.66 465.05h4.27v2.14h-4.27zM1575.20 465.05h2.14v2.14h-2.14zM1588.02 465.05h2.14v2.14h-2.14zM1594.43 465.05h2.14v2.14h-2.14zM1453.44 467.19h6.41v2.14h-6.41zM1461.98 467.19h8.54v2.14h-8.54zM1472.66 467.19h6.41v2.14h-6.41zM1483.34 467.19h2.14v2.14h-2.14zM1504.71 467.19h4.27v2.14h-4.27zM1511.11 467.19h2.14v2.14h-2.14zM1515.39 467.19h6.41v2.14h-6.41zM1530.34 467.19h4.27v2.14h-4.27zM1536.75 467.19h2.14v2.14h-2.14zM1543.16 467.19h2.14v2.14h-2.14zM1547.43 467.19h2.14v2.14h-2.14zM1551.70 467.19h2.14v2.14h-2.14zM1555.98 467.19h2.14v2.14h-2.14zM1560.25 467.19h2.14v2.14h-2.14zM1564.52 467.19h4.27v2.14h-4.27zM1581.61 467.19h2.14v2.14h-2.14zM1585.88 467.19h2.14v2.14h-2.14zM1590.16 467.19h2.14v2.14h-2.14zM1594.43 467.19h2.14v2.14h-2.14zM1451.30 469.32h2.14v2.14h-2.14zM1455.57 469.32h2.14v2.14h-2.14zM1466.25 469.32h6.41v2.14h-6.41zM1487.62 469.32h2.14v2.14h-2.14zM1502.57 469.32h2.14v2.14h-2.14zM1508.98 469.32h4.27v2.14h-4.27zM1517.52 469.32h4.27v2.14h-4.27zM1534.61 469.32h4.27v2.14h-4.27zM1545.29 469.32h8.54v2.14h-8.54zM1555.98 469.32h2.14v2.14h-2.14zM1562.38 469.32h2.14v2.14h-2.14zM1566.66 469.32h4.27v2.14h-4.27zM1573.07 469.32h6.41v2.14h-6.41zM1583.75 469.32h4.27v2.14h-4.27zM1590.16 469.32h2.14v2.14h-2.14zM1594.43 469.32h2.14v2.14h-2.14zM1451.30 471.46h19.23v2.14h-19.23zM1472.66 471.46h6.41v2.14h-6.41zM1481.21 471.46h4.27v2.14h-4.27zM1489.75 471.46h4.27v2.14h-4.27zM1498.30 471.46h2.14v2.14h-2.14zM1502.57 471.46h4.27v2.14h-4.27zM1515.39 471.46h2.14v2.14h-2.14zM1519.66 471.46h10.68v2.14h-10.68zM1536.75 471.46h2.14v2.14h-2.14zM1541.02 471.46h2.14v2.14h-2.14zM1547.43 471.46h4.27v2.14h-4.27zM1560.25 471.46h8.54v2.14h-8.54zM1570.93 471.46h19.23v2.14h-19.23zM1451.30 473.60h10.68v2.14h-10.68zM1468.39 473.60h2.14v2.14h-2.14zM1472.66 473.60h2.14v2.14h-2.14zM1479.07 473.60h2.14v2.14h-2.14zM1487.62 473.60h2.14v2.14h-2.14zM1494.02 473.60h2.14v2.14h-2.14zM1498.30 473.60h8.54v2.14h-8.54zM1508.98 473.60h6.41v2.14h-6.41zM1519.66 473.60h2.14v2.14h-2.14zM1528.20 473.60h6.41v2.14h-6.41zM1536.75 473.60h2.14v2.14h-2.14zM1543.16 473.60h4.27v2.14h-4.27zM1551.70 473.60h2.14v2.14h-2.14zM1558.11 473.60h2.14v2.14h-2.14zM1562.38 473.60h2.14v2.14h-2.14zM1570.93 473.60h2.14v2.14h-2.14zM1577.34 473.60h4.27v2.14h-4.27zM1588.02 473.60h2.14v2.14h-2.14zM1592.29 473.60h4.27v2.14h-4.27zM1451.30 475.73h2.14v2.14h-2.14zM1459.84 475.73h2.14v2.14h-2.14zM1464.12 475.73h2.14v2.14h-2.14zM1468.39 475.73h2.14v2.14h-2.14zM1476.93 475.73h2.14v2.14h-2.14zM1487.62 475.73h6.41v2.14h-6.41zM1496.16 475.73h2.14v2.14h-2.14zM1502.57 475.73h2.14v2.14h-2.14zM1508.98 475.73h2.14v2.14h-2.14zM1519.66 475.73h2.14v2.14h-2.14zM1523.93 475.73h2.14v2.14h-2.14zM1528.20 475.73h4.27v2.14h-4.27zM1551.70 475.73h2.14v2.14h-2.14zM1555.98 475.73h4.27v2.14h-4.27zM1562.38 475.73h2.14v2.14h-2.14zM1566.66 475.73h2.14v2.14h-2.14zM1579.47 475.73h2.14v2.14h-2.14zM1583.75 475.73h2.14v2.14h-2.14zM1588.02 475.73h6.41v2.14h-6.41zM1455.57 477.87h2.14v2.14h-2.14zM1459.84 477.87h2.14v2.14h-2.14zM1468.39 477.87h2.14v2.14h-2.14zM1479.07 477.87h8.54v2.14h-8.54zM1489.75 477.87h2.14v2.14h-2.14zM1500.43 477.87h6.41v2.14h-6.41zM1513.25 477.87h2.14v2.14h-2.14zM1519.66 477.87h2.14v2.14h-2.14zM1528.20 477.87h6.41v2.14h-6.41zM1538.89 477.87h2.14v2.14h-2.14zM1549.57 477.87h4.27v2.14h-4.27zM1555.98 477.87h10.68v2.14h-10.68zM1573.07 477.87h8.54v2.14h-8.54zM1588.02 477.87h2.14v2.14h-2.14zM1453.44 480.00h2.14v2.14h-2.14zM1459.84 480.00h10.68v2.14h-10.68zM1472.66 480.00h2.14v2.14h-2.14zM1479.07 480.00h2.14v2.14h-2.14zM1487.62 480.00h6.41v2.14h-6.41zM1500.43 480.00h6.41v2.14h-6.41zM1508.98 480.00h6.41v2.14h-6.41zM1519.66 480.00h10.68v2.14h-10.68zM1532.48 480.00h4.27v2.14h-4.27zM1538.89 480.00h6.41v2.14h-6.41zM1547.43 480.00h2.14v2.14h-2.14zM1558.11 480.00h2.14v2.14h-2.14zM1562.38 480.00h6.41v2.14h-6.41zM1573.07 480.00h4.27v2.14h-4.27zM1579.47 480.00h17.09v2.14h-17.09zM1451.30 482.14h4.27v2.14h-4.27zM1457.71 482.14h2.14v2.14h-2.14zM1466.25 482.14h2.14v2.14h-2.14zM1474.80 482.14h2.14v2.14h-2.14zM1481.21 482.14h2.14v2.14h-2.14zM1491.89 482.14h2.14v2.14h-2.14zM1496.16 482.14h2.14v2.14h-2.14zM1504.71 482.14h2.14v2.14h-2.14zM1508.98 482.14h4.27v2.14h-4.27zM1515.39 482.14h2.14v2.14h-2.14zM1519.66 482.14h4.27v2.14h-4.27zM1526.07 482.14h2.14v2.14h-2.14zM1530.34 482.14h2.14v2.14h-2.14zM1538.89 482.14h2.14v2.14h-2.14zM1551.70 482.14h2.14v2.14h-2.14zM1562.38 482.14h2.14v2.14h-2.14zM1566.66 482.14h2.14v2.14h-2.14zM1573.07 482.14h2.14v2.14h-2.14zM1581.61 482.14h2.14v2.14h-2.14zM1590.16 482.14h2.14v2.14h-2.14zM1594.43 482.14h4.27v2.14h-4.27zM1464.12 484.28h2.14v2.14h-2.14zM1468.39 484.28h4.27v2.14h-4.27zM1479.07 484.28h6.41v2.14h-6.41zM1487.62 484.28h4.27v2.14h-4.27zM1494.02 484.28h4.27v2.14h-4.27zM1502.57 484.28h8.54v2.14h-8.54zM1515.39 484.28h2.14v2.14h-2.14zM1521.80 484.28h2.14v2.14h-2.14zM1528.20 484.28h2.14v2.14h-2.14zM1534.61 484.28h2.14v2.14h-2.14zM1538.89 484.28h2.14v2.14h-2.14zM1543.16 484.28h4.27v2.14h-4.27zM1555.98 484.28h4.27v2.14h-4.27zM1562.38 484.28h2.14v2.14h-2.14zM1566.66 484.28h6.41v2.14h-6.41zM1579.47 484.28h4.27v2.14h-4.27zM1585.88 484.28h2.14v2.14h-2.14zM1592.29 484.28h6.41v2.14h-6.41zM1453.44 486.41h2.14v2.14h-2.14zM1457.71 486.41h2.14v2.14h-2.14zM1466.25 486.41h6.41v2.14h-6.41zM1479.07 486.41h6.41v2.14h-6.41zM1487.62 486.41h4.27v2.14h-4.27zM1496.16 486.41h2.14v2.14h-2.14zM1500.43 486.41h2.14v2.14h-2.14zM1504.71 486.41h14.95v2.14h-14.95zM1521.80 486.41h4.27v2.14h-4.27zM1532.48 486.41h2.14v2.14h-2.14zM1547.43 486.41h4.27v2.14h-4.27zM1564.52 486.41h8.54v2.14h-8.54zM1577.34 486.41h4.27v2.14h-4.27zM1592.29 486.41h4.27v2.14h-4.27zM1459.84 488.55h6.41v2.14h-6.41zM1470.53 488.55h2.14v2.14h-2.14zM1479.07 488.55h2.14v2.14h-2.14zM1483.34 488.55h6.41v2.14h-6.41zM1491.89 488.55h2.14v2.14h-2.14zM1498.30 488.55h2.14v2.14h-2.14zM1506.84 488.55h2.14v2.14h-2.14zM1515.39 488.55h4.27v2.14h-4.27zM1521.80 488.55h2.14v2.14h-2.14zM1528.20 488.55h4.27v2.14h-4.27zM1534.61 488.55h4.27v2.14h-4.27zM1541.02 488.55h2.14v2.14h-2.14zM1547.43 488.55h2.14v2.14h-2.14zM1551.70 488.55h2.14v2.14h-2.14zM1560.25 488.55h4.27v2.14h-4.27zM1566.66 488.55h8.54v2.14h-8.54zM1579.47 488.55h4.27v2.14h-4.27zM1585.88 488.55h2.14v2.14h-2.14zM1594.43 488.55h2.14v2.14h-2.14zM1451.30 490.69h2.14v2.14h-2.14zM1455.57 490.69h2.14v2.14h-2.14zM1459.84 490.69h2.14v2.14h-2.14zM1466.25 490.69h4.27v2.14h-4.27zM1474.80 490.69h8.54v2.14h-8.54zM1494.02 490.69h2.14v2.14h-2.14zM1500.43 490.69h2.14v2.14h-2.14zM1504.71 490.69h2.14v2.14h-2.14zM1508.98 490.69h4.27v2.14h-4.27zM1515.39 490.69h6.41v2.14h-6.41zM1526.07 490.69h2.14v2.14h-2.14zM1536.75 490.69h4.27v2.14h-4.27zM1543.16 490.69h2.14v2.14h-2.14zM1547.43 490.69h4.27v2.14h-4.27zM1564.52 490.69h2.14v2.14h-2.14zM1568.79 490.69h8.54v2.14h-8.54zM1579.47 490.69h6.41v2.14h-6.41zM1592.29 490.69h6.41v2.14h-6.41zM1451.30 492.82h6.41v2.14h-6.41zM1459.84 492.82h10.68v2.14h-10.68zM1474.80 492.82h2.14v2.14h-2.14zM1479.07 492.82h2.14v2.14h-2.14zM1483.34 492.82h6.41v2.14h-6.41zM1494.02 492.82h2.14v2.14h-2.14zM1500.43 492.82h4.27v2.14h-4.27zM1506.84 492.82h2.14v2.14h-2.14zM1513.25 492.82h6.41v2.14h-6.41zM1528.20 492.82h4.27v2.14h-4.27zM1536.75 492.82h2.14v2.14h-2.14zM1545.29 492.82h2.14v2.14h-2.14zM1566.66 492.82h4.27v2.14h-4.27zM1573.07 492.82h2.14v2.14h-2.14zM1577.34 492.82h2.14v2.14h-2.14zM1581.61 492.82h4.27v2.14h-4.27zM1588.02 492.82h4.27v2.14h-4.27zM1596.56 492.82h2.14v2.14h-2.14zM1451.30 494.96h2.14v2.14h-2.14zM1455.57 494.96h2.14v2.14h-2.14zM1459.84 494.96h2.14v2.14h-2.14zM1466.25 494.96h10.68v2.14h-10.68zM1481.21 494.96h2.14v2.14h-2.14zM1485.48 494.96h2.14v2.14h-2.14zM1496.16 494.96h8.54v2.14h-8.54zM1511.11 494.96h2.14v2.14h-2.14zM1517.52 494.96h2.14v2.14h-2.14zM1521.80 494.96h8.54v2.14h-8.54zM1538.89 494.96h8.54v2.14h-8.54zM1555.98 494.96h4.27v2.14h-4.27zM1562.38 494.96h10.68v2.14h-10.68zM1575.20 494.96h2.14v2.14h-2.14zM1581.61 494.96h4.27v2.14h-4.27zM1455.57 497.09h2.14v2.14h-2.14zM1464.12 497.09h2.14v2.14h-2.14zM1468.39 497.09h2.14v2.14h-2.14zM1476.93 497.09h4.27v2.14h-4.27zM1489.75 497.09h4.27v2.14h-4.27zM1498.30 497.09h2.14v2.14h-2.14zM1504.71 497.09h2.14v2.14h-2.14zM1508.98 497.09h2.14v2.14h-2.14zM1513.25 497.09h6.41v2.14h-6.41zM1521.80 497.09h6.41v2.14h-6.41zM1532.48 497.09h6.41v2.14h-6.41zM1541.02 497.09h4.27v2.14h-4.27zM1549.57 497.09h4.27v2.14h-4.27zM1558.11 497.09h2.14v2.14h-2.14zM1562.38 497.09h4.27v2.14h-4.27zM1568.79 497.09h2.14v2.14h-2.14zM1573.07 497.09h4.27v2.14h-4.27zM1579.47 497.09h4.27v2.14h-4.27zM1592.29 497.09h4.27v2.14h-4.27zM1453.44 499.23h2.14v2.14h-2.14zM1457.71 499.23h2.14v2.14h-2.14zM1461.98 499.23h2.14v2.14h-2.14zM1470.53 499.23h2.14v2.14h-2.14zM1479.07 499.23h2.14v2.14h-2.14zM1483.34 499.23h2.14v2.14h-2.14zM1491.89 499.23h2.14v2.14h-2.14zM1496.16 499.23h4.27v2.14h-4.27zM1504.71 499.23h4.27v2.14h-4.27zM1515.39 499.23h6.41v2.14h-6.41zM1528.20 499.23h6.41v2.14h-6.41zM1538.89 499.23h2.14v2.14h-2.14zM1555.98 499.23h2.14v2.14h-2.14zM1560.25 499.23h6.41v2.14h-6.41zM1568.79 499.23h4.27v2.14h-4.27zM1581.61 499.23h2.14v2.14h-2.14zM1585.88 499.23h6.41v2.14h-6.41zM1596.56 499.23h2.14v2.14h-2.14zM1451.30 501.37h6.41v2.14h-6.41zM1461.98 501.37h4.27v2.14h-4.27zM1468.39 501.37h2.14v2.14h-2.14zM1472.66 501.37h2.14v2.14h-2.14zM1476.93 501.37h8.54v2.14h-8.54zM1487.62 501.37h2.14v2.14h-2.14zM1494.02 501.37h8.54v2.14h-8.54zM1506.84 501.37h4.27v2.14h-4.27zM1513.25 501.37h8.54v2.14h-8.54zM1523.93 501.37h2.14v2.14h-2.14zM1532.48 501.37h2.14v2.14h-2.14zM1536.75 501.37h2.14v2.14h-2.14zM1541.02 501.37h8.54v2.14h-8.54zM1568.79 501.37h2.14v2.14h-2.14zM1573.07 501.37h2.14v2.14h-2.14zM1588.02 501.37h8.54v2.14h-8.54zM1451.30 503.50h4.27v2.14h-4.27zM1459.84 503.50h2.14v2.14h-2.14zM1470.53 503.50h2.14v2.14h-2.14zM1474.80 503.50h2.14v2.14h-2.14zM1479.07 503.50h4.27v2.14h-4.27zM1489.75 503.50h2.14v2.14h-2.14zM1494.02 503.50h2.14v2.14h-2.14zM1498.30 503.50h2.14v2.14h-2.14zM1502.57 503.50h6.41v2.14h-6.41zM1513.25 503.50h2.14v2.14h-2.14zM1519.66 503.50h4.27v2.14h-4.27zM1528.20 503.50h2.14v2.14h-2.14zM1536.75 503.50h8.54v2.14h-8.54zM1551.70 503.50h6.41v2.14h-6.41zM1564.52 503.50h4.27v2.14h-4.27zM1570.93 503.50h4.27v2.14h-4.27zM1579.47 503.50h2.14v2.14h-2.14zM1583.75 503.50h14.95v2.14h-14.95zM1455.57 505.64h10.68v2.14h-10.68zM1470.53 505.64h8.54v2.14h-8.54zM1481.21 505.64h2.14v2.14h-2.14zM1487.62 505.64h6.41v2.14h-6.41zM1498.30 505.64h6.41v2.14h-6.41zM1508.98 505.64h2.14v2.14h-2.14zM1521.80 505.64h2.14v2.14h-2.14zM1526.07 505.64h2.14v2.14h-2.14zM1530.34 505.64h6.41v2.14h-6.41zM1541.02 505.64h2.14v2.14h-2.14zM1549.57 505.64h8.54v2.14h-8.54zM1564.52 505.64h4.27v2.14h-4.27zM1570.93 505.64h10.68v2.14h-10.68zM1583.75 505.64h2.14v2.14h-2.14zM1588.02 505.64h4.27v2.14h-4.27zM1594.43 505.64h2.14v2.14h-2.14zM1451.30 507.78h12.82v2.14h-12.82zM1468.39 507.78h2.14v2.14h-2.14zM1472.66 507.78h4.27v2.14h-4.27zM1479.07 507.78h4.27v2.14h-4.27zM1489.75 507.78h2.14v2.14h-2.14zM1519.66 507.78h2.14v2.14h-2.14zM1530.34 507.78h2.14v2.14h-2.14zM1534.61 507.78h2.14v2.14h-2.14zM1538.89 507.78h2.14v2.14h-2.14zM1543.16 507.78h2.14v2.14h-2.14zM1551.70 507.78h2.14v2.14h-2.14zM1555.98 507.78h4.27v2.14h-4.27zM1566.66 507.78h4.27v2.14h-4.27zM1575.20 507.78h2.14v2.14h-2.14zM1581.61 507.78h2.14v2.14h-2.14zM1585.88 507.78h4.27v2.14h-4.27zM1594.43 507.78h4.27v2.14h-4.27zM1451.30 509.91h2.14v2.14h-2.14zM1455.57 509.91h6.41v2.14h-6.41zM1464.12 509.91h2.14v2.14h-2.14zM1476.93 509.91h6.41v2.14h-6.41zM1487.62 509.91h2.14v2.14h-2.14zM1491.89 509.91h8.54v2.14h-8.54zM1504.71 509.91h6.41v2.14h-6.41zM1515.39 509.91h4.27v2.14h-4.27zM1534.61 509.91h2.14v2.14h-2.14zM1541.02 509.91h2.14v2.14h-2.14zM1545.29 509.91h2.14v2.14h-2.14zM1549.57 509.91h4.27v2.14h-4.27zM1568.79 509.91h2.14v2.14h-2.14zM1577.34 509.91h4.27v2.14h-4.27zM1590.16 509.91h2.14v2.14h-2.14zM1451.30 512.05h2.14v2.14h-2.14zM1455.57 512.05h2.14v2.14h-2.14zM1466.25 512.05h4.27v2.14h-4.27zM1474.80 512.05h14.95v2.14h-14.95zM1496.16 512.05h2.14v2.14h-2.14zM1506.84 512.05h6.41v2.14h-6.41zM1515.39 512.05h2.14v2.14h-2.14zM1534.61 512.05h4.27v2.14h-4.27zM1547.43 512.05h4.27v2.14h-4.27zM1570.93 512.05h8.54v2.14h-8.54zM1581.61 512.05h4.27v2.14h-4.27zM1588.02 512.05h8.54v2.14h-8.54zM1451.30 514.18h2.14v2.14h-2.14zM1455.57 514.18h2.14v2.14h-2.14zM1459.84 514.18h2.14v2.14h-2.14zM1464.12 514.18h6.41v2.14h-6.41zM1472.66 514.18h2.14v2.14h-2.14zM1479.07 514.18h2.14v2.14h-2.14zM1483.34 514.18h6.41v2.14h-6.41zM1502.57 514.18h4.27v2.14h-4.27zM1515.39 514.18h2.14v2.14h-2.14zM1523.93 514.18h2.14v2.14h-2.14zM1530.34 514.18h2.14v2.14h-2.14zM1534.61 514.18h4.27v2.14h-4.27zM1541.02 514.18h6.41v2.14h-6.41zM1549.57 514.18h2.14v2.14h-2.14zM1562.38 514.18h2.14v2.14h-2.14zM1566.66 514.18h2.14v2.14h-2.14zM1570.93 514.18h4.27v2.14h-4.27zM1577.34 514.18h2.14v2.14h-2.14zM1583.75 514.18h2.14v2.14h-2.14zM1588.02 514.18h2.14v2.14h-2.14zM1596.56 514.18h2.14v2.14h-2.14zM1451.30 516.32h2.14v2.14h-2.14zM1455.57 516.32h2.14v2.14h-2.14zM1470.53 516.32h2.14v2.14h-2.14zM1476.93 516.32h2.14v2.14h-2.14zM1481.21 516.32h4.27v2.14h-4.27zM1487.62 516.32h2.14v2.14h-2.14zM1491.89 516.32h6.41v2.14h-6.41zM1506.84 516.32h6.41v2.14h-6.41zM1519.66 516.32h10.68v2.14h-10.68zM1532.48 516.32h4.27v2.14h-4.27zM1538.89 516.32h2.14v2.14h-2.14zM1545.29 516.32h4.27v2.14h-4.27zM1553.84 516.32h2.14v2.14h-2.14zM1558.11 516.32h2.14v2.14h-2.14zM1566.66 516.32h4.27v2.14h-4.27zM1579.47 516.32h4.27v2.14h-4.27zM1585.88 516.32h6.41v2.14h-6.41zM1594.43 516.32h4.27v2.14h-4.27zM1451.30 518.46h6.41v2.14h-6.41zM1461.98 518.46h8.54v2.14h-8.54zM1472.66 518.46h2.14v2.14h-2.14zM1476.93 518.46h4.27v2.14h-4.27zM1483.34 518.46h2.14v2.14h-2.14zM1496.16 518.46h4.27v2.14h-4.27zM1502.57 518.46h2.14v2.14h-2.14zM1506.84 518.46h2.14v2.14h-2.14zM1511.11 518.46h6.41v2.14h-6.41zM1523.93 518.46h2.14v2.14h-2.14zM1528.20 518.46h2.14v2.14h-2.14zM1534.61 518.46h8.54v2.14h-8.54zM1549.57 518.46h2.14v2.14h-2.14zM1553.84 518.46h4.27v2.14h-4.27zM1566.66 518.46h6.41v2.14h-6.41zM1575.20 518.46h2.14v2.14h-2.14zM1594.43 518.46h4.27v2.14h-4.27zM1451.30 520.59h2.14v2.14h-2.14zM1459.84 520.59h4.27v2.14h-4.27zM1474.80 520.59h2.14v2.14h-2.14zM1479.07 520.59h2.14v2.14h-2.14zM1487.62 520.59h2.14v2.14h-2.14zM1491.89 520.59h2.14v2.14h-2.14zM1496.16 520.59h4.27v2.14h-4.27zM1506.84 520.59h6.41v2.14h-6.41zM1517.52 520.59h17.09v2.14h-17.09zM1543.16 520.59h4.27v2.14h-4.27zM1555.98 520.59h6.41v2.14h-6.41zM1568.79 520.59h4.27v2.14h-4.27zM1575.20 520.59h2.14v2.14h-2.14zM1579.47 520.59h8.54v2.14h-8.54zM1592.29 520.59h4.27v2.14h-4.27zM1451.30 522.73h2.14v2.14h-2.14zM1459.84 522.73h2.14v2.14h-2.14zM1464.12 522.73h2.14v2.14h-2.14zM1468.39 522.73h2.14v2.14h-2.14zM1476.93 522.73h2.14v2.14h-2.14zM1483.34 522.73h2.14v2.14h-2.14zM1487.62 522.73h6.41v2.14h-6.41zM1496.16 522.73h4.27v2.14h-4.27zM1502.57 522.73h2.14v2.14h-2.14zM1506.84 522.73h4.27v2.14h-4.27zM1528.20 522.73h4.27v2.14h-4.27zM1534.61 522.73h2.14v2.14h-2.14zM1543.16 522.73h8.54v2.14h-8.54zM1568.79 522.73h6.41v2.14h-6.41zM1579.47 522.73h2.14v2.14h-2.14zM1585.88 522.73h4.27v2.14h-4.27zM1592.29 522.73h6.41v2.14h-6.41zM1451.30 524.87h6.41v2.14h-6.41zM1459.84 524.87h2.14v2.14h-2.14zM1472.66 524.87h2.14v2.14h-2.14zM1479.07 524.87h2.14v2.14h-2.14zM1494.02 524.87h6.41v2.14h-6.41zM1504.71 524.87h2.14v2.14h-2.14zM1517.52 524.87h6.41v2.14h-6.41zM1532.48 524.87h2.14v2.14h-2.14zM1547.43 524.87h2.14v2.14h-2.14zM1553.84 524.87h2.14v2.14h-2.14zM1560.25 524.87h2.14v2.14h-2.14zM1564.52 524.87h4.27v2.14h-4.27zM1570.93 524.87h2.14v2.14h-2.14zM1575.20 524.87h2.14v2.14h-2.14zM1581.61 524.87h2.14v2.14h-2.14zM1585.88 524.87h2.14v2.14h-2.14zM1592.29 524.87h2.14v2.14h-2.14zM1596.56 524.87h2.14v2.14h-2.14zM1451.30 527.00h6.41v2.14h-6.41zM1459.84 527.00h2.14v2.14h-2.14zM1464.12 527.00h2.14v2.14h-2.14zM1472.66 527.00h2.14v2.14h-2.14zM1479.07 527.00h2.14v2.14h-2.14zM1485.48 527.00h2.14v2.14h-2.14zM1491.89 527.00h10.68v2.14h-10.68zM1504.71 527.00h2.14v2.14h-2.14zM1515.39 527.00h2.14v2.14h-2.14zM1521.80 527.00h4.27v2.14h-4.27zM1528.20 527.00h2.14v2.14h-2.14zM1532.48 527.00h2.14v2.14h-2.14zM1536.75 527.00h2.14v2.14h-2.14zM1541.02 527.00h4.27v2.14h-4.27zM1558.11 527.00h2.14v2.14h-2.14zM1562.38 527.00h4.27v2.14h-4.27zM1568.79 527.00h6.41v2.14h-6.41zM1579.47 527.00h10.68v2.14h-10.68zM1457.71 529.14h4.27v2.14h-4.27zM1470.53 529.14h2.14v2.14h-2.14zM1476.93 529.14h2.14v2.14h-2.14zM1481.21 529.14h6.41v2.14h-6.41zM1491.89 529.14h2.14v2.14h-2.14zM1502.57 529.14h2.14v2.14h-2.14zM1506.84 529.14h2.14v2.14h-2.14zM1511.11 529.14h4.27v2.14h-4.27zM1517.52 529.14h6.41v2.14h-6.41zM1526.07 529.14h4.27v2.14h-4.27zM1532.48 529.14h4.27v2.14h-4.27zM1543.16 529.14h2.14v2.14h-2.14zM1553.84 529.14h2.14v2.14h-2.14zM1558.11 529.14h4.27v2.14h-4.27zM1564.52 529.14h2.14v2.14h-2.14zM1568.79 529.14h2.14v2.14h-2.14zM1573.07 529.14h2.14v2.14h-2.14zM1579.47 529.14h2.14v2.14h-2.14zM1585.88 529.14h4.27v2.14h-4.27zM1596.56 529.14h2.14v2.14h-2.14zM1453.44 531.27h4.27v2.14h-4.27zM1459.84 531.27h2.14v2.14h-2.14zM1464.12 531.27h4.27v2.14h-4.27zM1470.53 531.27h6.41v2.14h-6.41zM1479.07 531.27h2.14v2.14h-2.14zM1483.34 531.27h2.14v2.14h-2.14zM1489.75 531.27h2.14v2.14h-2.14zM1494.02 531.27h4.27v2.14h-4.27zM1504.71 531.27h2.14v2.14h-2.14zM1508.98 531.27h8.54v2.14h-8.54zM1519.66 531.27h12.82v2.14h-12.82zM1534.61 531.27h4.27v2.14h-4.27zM1543.16 531.27h2.14v2.14h-2.14zM1553.84 531.27h6.41v2.14h-6.41zM1573.07 531.27h2.14v2.14h-2.14zM1579.47 531.27h10.68v2.14h-10.68zM1592.29 531.27h4.27v2.14h-4.27zM1470.53 533.41h8.54v2.14h-8.54zM1491.89 533.41h4.27v2.14h-4.27zM1498.30 533.41h2.14v2.14h-2.14zM1502.57 533.41h2.14v2.14h-2.14zM1508.98 533.41h6.41v2.14h-6.41zM1519.66 533.41h2.14v2.14h-2.14zM1528.20 533.41h4.27v2.14h-4.27zM1534.61 533.41h4.27v2.14h-4.27zM1547.43 533.41h2.14v2.14h-2.14zM1551.70 533.41h4.27v2.14h-4.27zM1560.25 533.41h2.14v2.14h-2.14zM1564.52 533.41h6.41v2.14h-6.41zM1577.34 533.41h4.27v2.14h-4.27zM1588.02 533.41h4.27v2.14h-4.27zM1451.30 535.55h14.95v2.14h-14.95zM1470.53 535.55h2.14v2.14h-2.14zM1476.93 535.55h2.14v2.14h-2.14zM1481.21 535.55h8.54v2.14h-8.54zM1494.02 535.55h2.14v2.14h-2.14zM1502.57 535.55h2.14v2.14h-2.14zM1506.84 535.55h2.14v2.14h-2.14zM1511.11 535.55h2.14v2.14h-2.14zM1517.52 535.55h4.27v2.14h-4.27zM1523.93 535.55h2.14v2.14h-2.14zM1528.20 535.55h10.68v2.14h-10.68zM1541.02 535.55h2.14v2.14h-2.14zM1545.29 535.55h2.14v2.14h-2.14zM1560.25 535.55h2.14v2.14h-2.14zM1564.52 535.55h6.41v2.14h-6.41zM1573.07 535.55h2.14v2.14h-2.14zM1577.34 535.55h4.27v2.14h-4.27zM1583.75 535.55h2.14v2.14h-2.14zM1588.02 535.55h2.14v2.14h-2.14zM1592.29 535.55h2.14v2.14h-2.14zM1596.56 535.55h2.14v2.14h-2.14zM1451.30 537.68h2.14v2.14h-2.14zM1464.12 537.68h2.14v2.14h-2.14zM1472.66 537.68h4.27v2.14h-4.27zM1485.48 537.68h17.09v2.14h-17.09zM1506.84 537.68h4.27v2.14h-4.27zM1513.25 537.68h4.27v2.14h-4.27zM1519.66 537.68h2.14v2.14h-2.14zM1528.20 537.68h4.27v2.14h-4.27zM1534.61 537.68h2.14v2.14h-2.14zM1538.89 537.68h4.27v2.14h-4.27zM1545.29 537.68h4.27v2.14h-4.27zM1564.52 537.68h2.14v2.14h-2.14zM1568.79 537.68h2.14v2.14h-2.14zM1573.07 537.68h8.54v2.14h-8.54zM1588.02 537.68h10.68v2.14h-10.68zM1451.30 539.82h2.14v2.14h-2.14zM1455.57 539.82h6.41v2.14h-6.41zM1464.12 539.82h2.14v2.14h-2.14zM1468.39 539.82h2.14v2.14h-2.14zM1472.66 539.82h2.14v2.14h-2.14zM1476.93 539.82h2.14v2.14h-2.14zM1481.21 539.82h2.14v2.14h-2.14zM1485.48 539.82h2.14v2.14h-2.14zM1489.75 539.82h4.27v2.14h-4.27zM1496.16 539.82h2.14v2.14h-2.14zM1511.11 539.82h4.27v2.14h-4.27zM1517.52 539.82h12.82v2.14h-12.82zM1534.61 539.82h2.14v2.14h-2.14zM1547.43 539.82h6.41v2.14h-6.41zM1558.11 539.82h2.14v2.14h-2.14zM1566.66 539.82h2.14v2.14h-2.14zM1570.93 539.82h2.14v2.14h-2.14zM1575.20 539.82h14.95v2.14h-14.95zM1592.29 539.82h2.14v2.14h-2.14zM1596.56 539.82h2.14v2.14h-2.14zM1451.30 541.96h2.14v2.14h-2.14zM1455.57 541.96h6.41v2.14h-6.41zM1464.12 541.96h2.14v2.14h-2.14zM1474.80 541.96h2.14v2.14h-2.14zM1479.07 541.96h2.14v2.14h-2.14zM1487.62 541.96h4.27v2.14h-4.27zM1494.02 541.96h6.41v2.14h-6.41zM1504.71 541.96h4.27v2.14h-4.27zM1515.39 541.96h2.14v2.14h-2.14zM1519.66 541.96h6.41v2.14h-6.41zM1528.20 541.96h4.27v2.14h-4.27zM1536.75 541.96h4.27v2.14h-4.27zM1549.57 541.96h2.14v2.14h-2.14zM1566.66 541.96h2.14v2.14h-2.14zM1577.34 541.96h2.14v2.14h-2.14zM1583.75 541.96h4.27v2.14h-4.27zM1451.30 544.09h2.14v2.14h-2.14zM1455.57 544.09h6.41v2.14h-6.41zM1464.12 544.09h2.14v2.14h-2.14zM1470.53 544.09h4.27v2.14h-4.27zM1483.34 544.09h4.27v2.14h-4.27zM1489.75 544.09h2.14v2.14h-2.14zM1494.02 544.09h10.68v2.14h-10.68zM1511.11 544.09h2.14v2.14h-2.14zM1517.52 544.09h6.41v2.14h-6.41zM1526.07 544.09h2.14v2.14h-2.14zM1532.48 544.09h2.14v2.14h-2.14zM1536.75 544.09h2.14v2.14h-2.14zM1541.02 544.09h2.14v2.14h-2.14zM1558.11 544.09h4.27v2.14h-4.27zM1564.52 544.09h6.41v2.14h-6.41zM1573.07 544.09h2.14v2.14h-2.14zM1581.61 544.09h8.54v2.14h-8.54zM1592.29 544.09h4.27v2.14h-4.27zM1451.30 546.23h2.14v2.14h-2.14zM1464.12 546.23h2.14v2.14h-2.14zM1470.53 546.23h2.14v2.14h-2.14zM1474.80 546.23h6.41v2.14h-6.41zM1489.75 546.23h2.14v2.14h-2.14zM1502.57 546.23h10.68v2.14h-10.68zM1515.39 546.23h2.14v2.14h-2.14zM1519.66 546.23h4.27v2.14h-4.27zM1526.07 546.23h2.14v2.14h-2.14zM1532.48 546.23h6.41v2.14h-6.41zM1541.02 546.23h2.14v2.14h-2.14zM1547.43 546.23h6.41v2.14h-6.41zM1558.11 546.23h6.41v2.14h-6.41zM1566.66 546.23h4.27v2.14h-4.27zM1575.20 546.23h2.14v2.14h-2.14zM1579.47 546.23h2.14v2.14h-2.14zM1583.75 546.23h2.14v2.14h-2.14zM1588.02 546.23h6.41v2.14h-6.41zM1596.56 546.23h2.14v2.14h-2.14zM1451.30 548.36h14.95v2.14h-14.95zM1472.66 548.36h4.27v2.14h-4.27zM1479.07 548.36h4.27v2.14h-4.27zM1491.89 548.36h4.27v2.14h-4.27zM1504.71 548.36h8.54v2.14h-8.54zM1515.39 548.36h2.14v2.14h-2.14zM1521.80 548.36h2.14v2.14h-2.14zM1528.20 548.36h17.09v2.14h-17.09zM1547.43 548.36h2.14v2.14h-2.14zM1558.11 548.36h2.14v2.14h-2.14zM1564.52 548.36h2.14v2.14h-2.14zM1568.79 548.36h8.54v2.14h-8.54zM1579.47 548.36h2.14v2.14h-2.14z" fill="#0a0a0a"/>
</svg>
<div class="lbl b" style="left:6px;top:70px;width:277px;height:42px;line-height:42px;text-align:center;font-size:22.8px;color:#45464f">Записать и закрыть</div>
<div class="lbl" style="left:419.3px;top:70px;height:42px;line-height:42px;font-size:22.9px;color:#4a4a4a">Редактирование</div>
<div id="warn">Изменение имен областей, а также параметров макета может привести к потере работоспособности печатной формы.</div>
<div class="cn" style="left:210.5px;width:14px;font-weight:700;">1</div>
<div class="cn" style="left:225.5px;width:44px;">2</div>
<div class="cn" style="left:270.5px;width:44px;">3</div>
<div class="cn" style="left:315.5px;width:44px;">4</div>
<div class="cn" style="left:360.5px;width:44px;">5</div>
<div class="cn" style="left:405.5px;width:44px;">6</div>
<div class="cn" style="left:450.5px;width:44px;">7</div>
<div class="cn" style="left:495.5px;width:43px;">8</div>
<div class="cn" style="left:539.5px;width:44px;">9</div>
<div class="cn" style="left:584.5px;width:44px;">10</div>
<div class="cn" style="left:629.5px;width:44px;">11</div>
<div class="cn" style="left:674.5px;width:44px;">12</div>
<div class="cn" style="left:719.5px;width:44px;">13</div>
<div class="cn" style="left:764.5px;width:44px;">14</div>
<div class="cn" style="left:809.5px;width:44px;">15</div>
<div class="cn" style="left:854.5px;width:44px;">16</div>
<div class="cn" style="left:899.5px;width:44px;">17</div>
<div class="cn" style="left:944.5px;width:44px;">18</div>
<div class="cn" style="left:989.5px;width:44px;">19</div>
<div class="cn" style="left:1034.5px;width:44px;">20</div>
<div class="cn" style="left:1079.5px;width:44px;">21</div>
<div class="cn" style="left:1124.5px;width:43px;">22</div>
<div class="cn" style="left:1168.5px;width:44px;">23</div>
<div class="cn" style="left:1213.5px;width:44px;">24</div>
<div class="cn" style="left:1258.5px;width:44px;">25</div>
<div class="cn" style="left:1303.5px;width:44px;">26</div>
<div class="cn" style="left:1348.5px;width:44px;">27</div>
<div class="cn" style="left:1393.5px;width:44px;">28</div>
<div class="cn" style="left:1438.5px;width:44px;">29</div>
<div class="cn" style="left:1483.5px;width:44px;">30</div>
<div class="cn" style="left:1528.5px;width:44px;">31</div>
<div class="cn" style="left:1573.5px;width:44px;">32</div>
<div class="cn" style="left:1618.5px;width:31px;">33</div>
<div class="cn" style="left:1650.5px;width:134px;">34</div>
<div class="rn" style="top:362px;height:31px;line-height:31px">17</div>
<div class="rn" style="top:394px;height:36px;line-height:36px">18</div>
<div class="rn" style="top:431px;height:30px;line-height:30px">19</div>
<div class="rn" style="top:462px;height:30px;line-height:30px">20</div>
<div class="rn" style="top:493px;height:36px;line-height:36px">21</div>
<div class="rn" style="top:530px;height:30px;line-height:30px">22</div>
<div class="rn" style="top:561px;height:30px;line-height:30px">23</div>
<div class="rn" style="top:592px;height:31px;line-height:31px">24</div>
<div class="rn" style="top:624px;height:30px;line-height:30px">25</div>
<div class="rn" style="top:655px;height:30px;line-height:30px">26</div>
<div class="rn" style="top:686px;height:30px;line-height:30px">27</div>
<div class="rn" style="top:717px;height:30px;line-height:30px">28</div>
<div class="rn" style="top:748px;height:19px;line-height:19px">29</div>
<div class="rn" style="top:768px;height:19px;line-height:19px">30</div>
<div class="rn" style="top:788px;height:36px;line-height:36px">31</div>
<div class="rn" style="top:825px;height:30px;line-height:30px">32</div>
<div class="rn" style="top:856px;height:11px;line-height:11px">33</div>
<div class="rn" style="top:868px;height:31px;line-height:31px">34</div>
<div class="rn" style="top:900px;height:36px;line-height:36px">35</div>
<div class="rn" style="top:937px;height:33px;line-height:33px">36</div>
<div class="rn" style="top:971px;height:12px;line-height:12px">37</div>
<div class="rn" style="top:984px;height:36px;line-height:36px">38</div>
<div class="rn" style="top:1021px;height:10px;line-height:10px">39</div>
<div class="rn" style="top:1032px;height:30px;line-height:30px">40</div>
<div class="rn" style="top:1063px;height:30px;line-height:30px">41</div>
<div class="rn" style="top:1094px;height:30px;line-height:30px">42</div>
<div class="rn" style="top:1125px;height:5px;line-height:5px">43</div>
<div class="rn" style="top:1131px;height:36px;line-height:36px">44</div>
<div class="rn" style="top:1168px;height:30px;line-height:30px">45</div>
<div class="rn" style="top:1199px;height:30px;line-height:30px">46</div>
<div class="rn" style="top:1230px;height:30px;line-height:30px">47</div>
<div class="rn" style="top:1261px;height:30px;line-height:30px">48</div>
<div class="rn" style="top:1292px;height:30px;line-height:30px">49</div>
<div class="rn" style="top:1323px;height:6px;line-height:6px">50</div>
<div class="rn" style="top:1330px;height:35px;line-height:35px">51</div>
<div class="rn" style="top:1366px;height:30px;line-height:30px">52</div>
<div class="rn" style="top:1397px;height:30px;line-height:30px">53</div>
<div class="rn" style="top:1428px;height:30px;line-height:30px">54</div>
<div class="rn" style="top:1459px;height:30px;line-height:30px">55</div>
<div class="rn" style="top:1490px;height:30px;line-height:30px">56</div>
<div class="rn" style="top:1521px;height:30px;line-height:30px">57</div>
<div class="rn" style="top:1552px;height:14px;line-height:14px">58</div>
<div class="rn" style="top:1567px;height:30px;line-height:30px">59</div>
<div class="an" style="top:394px"><span style="position:absolute;left:2.5px;top:0">ЗаголовокС</span></div>
<div class="an" style="top:686px"><span style="position:absolute;left:2.5px;top:0">Заголовок</span></div>
<div class="an" style="top:788px"><span style="position:absolute;left:2.5px;top:0">Поставщик</span></div>
<div class="an" style="top:900px"><span style="position:absolute;left:2.5px;top:0">Покупатель</span></div>
<div class="an" style="top:1063px"><span style="position:absolute;left:2.5px;top:0">НомерСтра</span></div>
<div class="an" style="top:1125px"><span style="position:absolute;left:2.5px;top:0">ШапкаТабл</span></div>
<div class="an" style="top:1199px"><span style="position:absolute;left:2.5px;top:0">СтрокаГруп</span></div>
<div class="an" style="top:1261px"><span style="position:absolute;left:2.5px;top:0">Строка</span></div>
<div class="an" style="top:1323px"><span style="position:absolute;left:2.5px;top:0">ШапкаТабл</span></div>
<div class="an" style="top:1397px"><span style="position:absolute;left:2.5px;top:0">СтрокаСоС</span></div>
<div class="an" style="top:1459px"><span style="position:absolute;left:2.5px;top:0">СтрокаСоС</span></div>
<div class="an" style="top:1521px"><span style="position:absolute;left:2.5px;top:0">ИтогоПоСтр</span></div>
<div class="t " style="font-size:25.5px;line-height:1;letter-spacing:0.024px;left:229.90px;top:399.81px;overflow:visible">&lt;БанкПолучателяПредставление&gt;</div>
<div class="t " style="font-size:22.95px;line-height:1;letter-spacing:-0.246px;left:230.30px;top:465.97px;overflow:visible">Банк получателя</div>
<div class="t " style="font-size:27.3px;line-height:1;letter-spacing:0.134px;left:231.20px;top:498.59px;overflow:visible">ИНН</div>
<div class="t " style="font-size:25.5px;line-height:1;letter-spacing:0.287px;left:319.90px;top:500.11px;overflow:visible">&lt;ИНН&gt;</div>
<div class="t " style="font-size:27.3px;line-height:1;letter-spacing:0.890px;left:652.30px;top:498.39px;overflow:visible">КПП</div>
<div class="t " style="font-size:25.5px;line-height:1;letter-spacing:0.424px;left:740.30px;top:499.91px;overflow:visible">&lt;КПП&gt;</div>
<div class="t " style="font-size:25.5px;line-height:1;letter-spacing:0.185px;left:229.90px;top:536.71px;overflow:visible">&lt;ПредставлениеПоставщика&gt;</div>
<div class="t " style="font-size:22.95px;line-height:1;letter-spacing:0.364px;left:230.30px;top:595.07px;overflow:visible">Получатель</div>
<div class="t " style="font-size:27.3px;line-height:1;letter-spacing:-0.217px;left:994.30px;top:399.29px;overflow:visible">БИК</div>
<div class="t " style="font-size:27.3px;line-height:1;letter-spacing:0.676px;left:994.30px;top:436.29px;overflow:visible">Сч. №</div>
<div class="t " style="font-size:27.3px;line-height:1;letter-spacing:0.676px;left:994.30px;top:498.59px;overflow:visible">Сч. №</div>
<div class="t " style="font-size:25.5px;line-height:1;letter-spacing:0.005px;left:1097.40px;top:401.11px;overflow:visible">&lt;БИКБанкаПолучателя&gt;</div>
<div class="t" style="left:1092px;top:431px;width:349px;height:61px"><span class="" style="font-size:25.5px;line-height:1;letter-spacing:0.100px;left:5.40px;top:5.91px">&lt;СчетБанкаПолучателяПредставление&gt;</span></div>
<div class="t" style="left:1092px;top:493px;width:349px;height:130px"><span class="" style="font-size:25.5px;line-height:1;letter-spacing:0.100px;left:5.40px;top:5.91px">&lt;СчетПолучателяПредставление&gt;</span></div>
<div class="t " style="font-size:22.95px;line-height:1;letter-spacing:0.129px;left:1446.40px;top:566.17px;overflow:visible">Отсканируйте для</div>
<div class="t " style="font-size:22.95px;line-height:1;left:1507.34px;top:594.07px;overflow:visible">оплаты</div>
<div class="t b" style="font-size:40.8px;line-height:1;letter-spacing:0.064px;left:235.30px;top:697.26px;overflow:visible">&lt;ПредставлениеДокумента&gt;</div>
<div class="t " style="font-size:28.05px;line-height:1;letter-spacing:-0.236px;left:230.30px;top:793.36px;overflow:visible">Поставщик:</div>
<div class="t b" style="font-size:28.05px;line-height:1;letter-spacing:0.072px;left:410.30px;top:793.36px;overflow:visible">&lt;ПредставлениеПоставщика&gt;</div>
<div class="t " style="font-size:28.05px;line-height:1;letter-spacing:-0.494px;left:231.30px;top:904.66px;overflow:visible">Склад:</div>
<div class="t b" style="font-size:28.05px;line-height:1;letter-spacing:0.277px;left:410.80px;top:904.66px;overflow:visible">109052, г. Москва, Нижегородская улица, 29-33с7, этаж 4, офис 7402</div>
<div class="t b" style="font-size:28.05px;line-height:1;letter-spacing:0.195px;left:411.30px;top:938.76px;overflow:visible">тел.: 8 (800) 200-63-23, +7 (495) 240-92-93</div>
<div class="t " style="font-size:28.05px;line-height:1;letter-spacing:-0.301px;left:230.30px;top:988.26px;overflow:visible">Покупатель:</div>
<div class="t b" style="font-size:28.05px;line-height:1;letter-spacing:0.139px;left:410.30px;top:988.26px;overflow:visible">&lt;ПредставлениеПолучателя&gt;</div>
<div class="t i" style="font-size:22.95px;line-height:1;letter-spacing:0.187px;left:230.30px;top:1066.07px;overflow:visible">Счет-договор</div>
<div class="t i" style="font-size:22.95px;line-height:1;letter-spacing:0.229px;left:1322.60px;top:1066.07px;overflow:visible">&lt;ПредставлениеСтраницы&gt;</div>
<div class="t b" style="font-size:28.05px;line-height:1;left:255.00px;top:1136.26px;overflow:visible">№</div>
<div class="t b" style="font-size:28.05px;line-height:1;left:462.08px;top:1136.26px;overflow:visible">Товар (Услуга)</div>
<div class="t b" style="font-size:28.05px;line-height:1;left:844.87px;top:1136.26px;overflow:visible">Артикул</div>
<div class="t b" style="font-size:28.05px;line-height:1;left:1015.71px;top:1136.26px;overflow:visible">Кол-во</div>
<div class="t b" style="font-size:28.05px;line-height:1;left:1156.74px;top:1136.26px;overflow:visible">Ед.</div>
<div class="t b" style="font-size:28.05px;line-height:1;left:1290.32px;top:1136.26px;overflow:visible">Цена</div>
<div class="t b" style="font-size:28.05px;line-height:1;left:1492.70px;top:1136.26px;overflow:visible">Сумма</div>
<div class="t b" style="font-size:22.95px;line-height:1;letter-spacing:0.120px;left:230.30px;top:1202.57px;overflow:visible">&lt;ПредставлениеНоменклатуры&gt;</div>
<div class="t b" style="font-size:22.95px;line-height:1;letter-spacing:-0.417px;left:1547.30px;top:1202.57px;overflow:visible">&lt;Сумма&gt;</div>
<div class="t" style="left:226px;top:1261px;width:88px;height:30px"><span class="" style="font-size:22.95px;line-height:1;left:-42.72px;top:3.97px">&lt;НомерСтроки&gt;</span></div>
<div class="t " style="font-size:22.95px;line-height:1;letter-spacing:-0.067px;left:319.30px;top:1264.97px;overflow:visible">&lt;ПредставлениеНоменклатуры&gt;</div>
<div class="t" style="left:809px;top:1261px;width:185px;height:30px"><span class="" style="font-size:22.95px;line-height:1;left:4.30px;top:3.97px">&lt;ПредставлениеАртикула&gt;</span></div>
<div class="t" style="left:995px;top:1261px;width:137px;height:30px"><span class="" style="font-size:22.95px;line-height:1;left:-18.57px;top:3.97px">&lt;Количество&gt;</span></div>
<div class="t" style="left:1133px;top:1261px;width:91px;height:30px"><span class="" style="font-size:22.95px;line-height:1;left:4.30px;top:3.97px">&lt;ЕдиницаИзмерения&gt;</span></div>
<div class="t " style="font-size:22.95px;line-height:1;letter-spacing:-0.469px;left:1340.60px;top:1264.97px;overflow:visible">&lt;Цена&gt;</div>
<div class="t " style="font-size:22.95px;line-height:1;letter-spacing:0.039px;left:1548.30px;top:1264.97px;overflow:visible">&lt;Сумма&gt;</div>
<div class="t b" style="font-size:28.05px;line-height:1;left:255.00px;top:1333.66px;overflow:visible">№</div>
<div class="t b" style="font-size:28.05px;line-height:1;left:462.08px;top:1333.66px;overflow:visible">Товар (Услуга)</div>
<div class="t b" style="font-size:28.05px;line-height:1;left:844.87px;top:1333.66px;overflow:visible">Артикул</div>
<div class="t b" style="font-size:28.05px;line-height:1;left:1015.71px;top:1333.66px;overflow:visible">Кол-во</div>
<div class="t b" style="font-size:28.05px;line-height:1;left:1156.74px;top:1333.66px;overflow:visible">Ед.</div>
<div class="t b" style="font-size:28.05px;line-height:1;left:1256.82px;top:1333.66px;overflow:visible">Цена</div>
<div class="t b" style="font-size:28.05px;line-height:1;left:1375.81px;top:1333.66px;overflow:visible">Скидка</div>
<div class="t b" style="font-size:28.05px;line-height:1;left:1525.70px;top:1333.66px;overflow:visible">Сумма</div>
<div class="t b" style="font-size:22.95px;line-height:1;letter-spacing:0.116px;left:230.20px;top:1400.97px;overflow:visible">&lt;ПредставлениеНоменклатуры&gt;</div>
<div class="t b" style="font-size:22.95px;line-height:1;letter-spacing:-0.417px;left:1547.30px;top:1400.97px;overflow:visible">&lt;Сумма&gt;</div>
<div class="t" style="left:226px;top:1459px;width:88px;height:30px"><span class="" style="font-size:22.95px;line-height:1;left:-42.72px;top:3.67px">&lt;НомерСтроки&gt;</span></div>
<div class="t " style="font-size:22.95px;line-height:1;letter-spacing:-0.067px;left:319.30px;top:1462.67px;overflow:visible">&lt;ПредставлениеНоменклатуры&gt;</div>
<div class="t" style="left:809px;top:1459px;width:185px;height:30px"><span class="" style="font-size:22.95px;line-height:1;left:4.30px;top:3.67px">&lt;ПредставлениеАртикула&gt;</span></div>
<div class="t" style="left:995px;top:1459px;width:137px;height:30px"><span class="" style="font-size:22.95px;line-height:1;left:-18.57px;top:3.67px">&lt;Количество&gt;</span></div>
<div class="t" style="left:1133px;top:1459px;width:91px;height:30px"><span class="" style="font-size:22.95px;line-height:1;left:4.30px;top:3.67px">&lt;ЕдиницаИзмерения&gt;</span></div>
<div class="t " style="font-size:22.95px;line-height:1;letter-spacing:-0.469px;left:1273.60px;top:1462.67px;overflow:visible">&lt;Цена&gt;</div>
<div class="t" style="left:1360px;top:1459px;width:132px;height:30px"><span class="" style="font-size:22.95px;line-height:1;left:-68.21px;top:3.67px">&lt;ПредставлениеСкидки&gt;</span></div>
<div class="t " style="font-size:22.95px;line-height:1;letter-spacing:0.039px;left:1548.30px;top:1462.67px;overflow:visible">&lt;Сумма&gt;</div>
<div class="t " style="font-size:22.95px;line-height:1;left:843.41px;top:1525.07px;overflow:visible">&lt;КоличествоНаСтранице&gt;</div>
<div class="t " style="font-size:22.95px;line-height:1;left:1415.51px;top:1525.07px;overflow:visible">&lt;СуммаНаСтранице&gt;</div>
<div class="t b" style="font-size:22.95px;line-height:1;letter-spacing:-0.288px;color:#141414;left:1483.50px;top:467.27px;overflow:visible">РисунокQR</div>
</body></html>
